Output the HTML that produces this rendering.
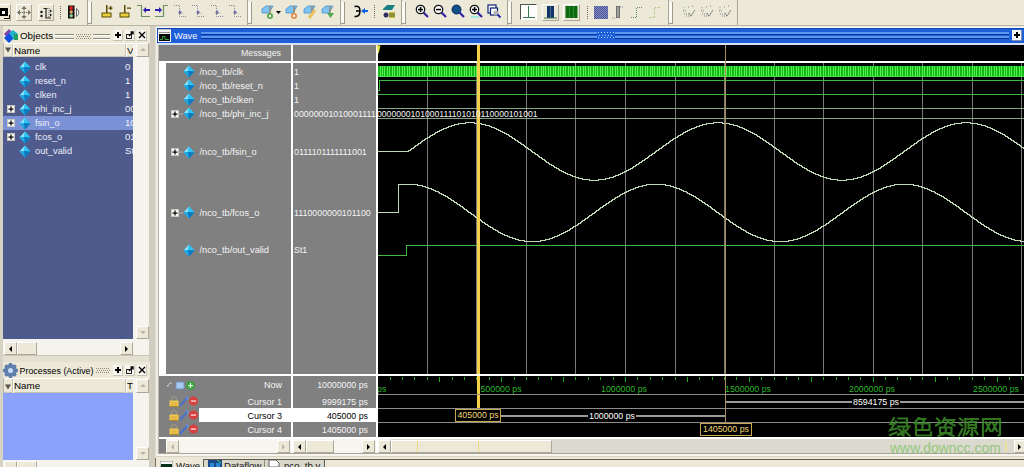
<!DOCTYPE html><html><head><meta charset="utf-8"><style>
*{margin:0;padding:0;box-sizing:border-box}
html,body{width:1024px;height:467px;overflow:hidden;background:#ECE9D8;font-family:"Liberation Sans",sans-serif;font-size:9px;color:#000}
.a{position:absolute}
.t{position:absolute;white-space:nowrap;line-height:10px;font-size:9px}
.w{color:#fff}
svg{position:absolute;left:0;top:0}
</style></head><body>
<div class="a" style="left:0px;top:0px;width:1024px;height:26px;background:#ECE9D8;"></div>
<div class="a" style="left:0px;top:25px;width:1024px;height:1px;background:#B9B6A6;"></div>
<div class="a" style="left:87px;top:0px;width:1px;height:25px;background:#A7A495;"></div>
<div class="a" style="left:247px;top:0px;width:1px;height:25px;background:#A7A495;"></div>
<div class="a" style="left:340px;top:0px;width:1px;height:25px;background:#A7A495;"></div>
<div class="a" style="left:401px;top:0px;width:1px;height:25px;background:#A7A495;"></div>
<div class="a" style="left:507px;top:0px;width:1px;height:25px;background:#A7A495;"></div>
<div class="a" style="left:668px;top:0px;width:1px;height:25px;background:#A7A495;"></div>
<div class="a" style="left:737px;top:0px;width:1px;height:25px;background:#A7A495;"></div>
<div class="a" style="left:88px;top:2px;width:3px;height:22px;background:#FBFAF6;"></div>
<div class="a" style="left:91px;top:2px;width:1px;height:22px;background:#9E9B8C;"></div>
<div class="a" style="left:88px;top:23px;width:4px;height:1px;background:#9E9B8C;"></div>
<div class="a" style="left:248px;top:2px;width:3px;height:22px;background:#FBFAF6;"></div>
<div class="a" style="left:251px;top:2px;width:1px;height:22px;background:#9E9B8C;"></div>
<div class="a" style="left:248px;top:23px;width:4px;height:1px;background:#9E9B8C;"></div>
<div class="a" style="left:341px;top:2px;width:3px;height:22px;background:#FBFAF6;"></div>
<div class="a" style="left:344px;top:2px;width:1px;height:22px;background:#9E9B8C;"></div>
<div class="a" style="left:341px;top:23px;width:4px;height:1px;background:#9E9B8C;"></div>
<div class="a" style="left:402px;top:2px;width:3px;height:22px;background:#FBFAF6;"></div>
<div class="a" style="left:405px;top:2px;width:1px;height:22px;background:#9E9B8C;"></div>
<div class="a" style="left:402px;top:23px;width:4px;height:1px;background:#9E9B8C;"></div>
<div class="a" style="left:508px;top:2px;width:3px;height:22px;background:#FBFAF6;"></div>
<div class="a" style="left:511px;top:2px;width:1px;height:22px;background:#9E9B8C;"></div>
<div class="a" style="left:508px;top:23px;width:4px;height:1px;background:#9E9B8C;"></div>
<div class="a" style="left:669px;top:2px;width:3px;height:22px;background:#FBFAF6;"></div>
<div class="a" style="left:672px;top:2px;width:1px;height:22px;background:#9E9B8C;"></div>
<div class="a" style="left:669px;top:23px;width:4px;height:1px;background:#9E9B8C;"></div>
<div class="a" style="left:-3px;top:4px;width:14px;height:17px;background:#ECE9D8;border-top:1px solid #fff;border-left:1px solid #fff;border-right:1px solid #ACA899;border-bottom:1px solid #ACA899"></div>
<div class="a" style="left:16px;top:4px;width:16px;height:17px;background:#ECE9D8;border-top:1px solid #fff;border-left:1px solid #fff;border-right:1px solid #ACA899;border-bottom:1px solid #ACA899"></div>
<div class="a" style="left:38px;top:4px;width:16px;height:17px;background:#ECE9D8;border-top:1px solid #fff;border-left:1px solid #fff;border-right:1px solid #ACA899;border-bottom:1px solid #ACA899"></div>
<svg class="a" style="left:0px;top:8px;" width="10" height="11" viewBox="0 0 10 11"><rect x="0" y="0" width="8" height="8" fill="#000"/><rect x="2" y="3" width="3" height="3" fill="#fff"/><path d="M4 10.5 H9.5 V7" stroke="#000" fill="none"/></svg>
<svg class="a" style="left:17px;top:6px;" width="14" height="13" viewBox="0 0 14 13"><g stroke="#6E6B60" stroke-width="1.2" stroke-dasharray="1.2 0.8" fill="none"><path d="M7 1 V12 M1 6.5 H13"/></g><polygon points="7,0 4.5,3 9.5,3" fill="#6E6B60"/><polygon points="7,13 4.5,10 9.5,10" fill="#6E6B60"/><polygon points="0,6.5 3,4 3,9" fill="#6E6B60"/><polygon points="14,6.5 11,4 11,9" fill="#6E6B60"/></svg>
<svg class="a" style="left:39px;top:6px;" width="14" height="13" viewBox="0 0 14 13"><circle cx="2.5" cy="6" r="1.2" fill="#111"/><circle cx="2.5" cy="10" r="1.2" fill="#111"/><path d="M4.5 2.5 H8.5 M7 2.5 V12 H12" stroke="#222" stroke-width="1.2" fill="none"/><path d="M10 2 V12" stroke="#555" stroke-dasharray="1 1"/><polygon points="13,5 11,3.5 11,6.5" fill="#111"/><polygon points="13,9 11,7.5 11,10.5" fill="#111"/></svg>
<svg class="a" style="left:60px;top:6px;" width="1" height="14" viewBox="0 0 1 14"><path d="M0.5 0 V14" stroke="#6E6B5C" stroke-dasharray="1 1"/></svg>
<svg class="a" style="left:67px;top:5px;" width="15" height="15" viewBox="0 0 15 15"><rect x="1" y="0.5" width="6.5" height="13" fill="#101010"/><circle cx="4.2" cy="3" r="2" fill="#D42020"/><circle cx="4.2" cy="7" r="1.7" fill="#EAA868"/><circle cx="4.2" cy="10.8" r="1.8" fill="#8CC88C"/><path d="M9.5 3.5 Q14 7.5 9.5 11.5 Z" fill="#fff" stroke="#333" stroke-width="0.7"/></svg>
<svg class="a" style="left:101px;top:5px;" width="13" height="13" viewBox="0 0 13 13"><rect x="1" y="8" width="9" height="4" fill="#E8D040" stroke="#5A4A00" stroke-width="1"/><rect x="5" y="0" width="1.5" height="8" fill="#5A4A00"/><rect x="7.5" y="2.5" width="4" height="1.3" fill="#5A4A00"/><rect x="9" y="1" width="1.3" height="4" fill="#5A4A00"/></svg>
<svg class="a" style="left:119px;top:5px;" width="13" height="13" viewBox="0 0 13 13"><rect x="1" y="8" width="9" height="4" fill="#E8D040" stroke="#5A4A00" stroke-width="1"/><rect x="5" y="0" width="1.5" height="8" fill="#5A4A00"/><rect x="8" y="2.5" width="4" height="1.3" fill="#5A4A00"/></svg>
<svg class="a" style="left:136px;top:4px;" width="15" height="14" viewBox="0 0 15 14"><path d="M1 1.5 H5.5 V12.5 H14" stroke="#6E9060" stroke-width="1.2" fill="none"/><polygon points="7,6 10,3 10,9" fill="#3020B0"/><rect x="9" y="5" width="5" height="2" fill="#3020B0"/></svg>
<svg class="a" style="left:154px;top:4px;" width="15" height="14" viewBox="0 0 15 14"><path d="M1 12.5 H9.5 V1.5 H14" stroke="#6E9060" stroke-width="1.2" fill="none"/><polygon points="8,6 5,3 5,9" fill="#3020B0"/><rect x="1" y="5" width="5" height="2" fill="#3020B0"/></svg>
<svg class="a" style="left:173px;top:4px;" width="14" height="14" viewBox="0 0 14 14"><g fill="none" stroke="#8A88A0" stroke-width="1" stroke-dasharray="1 1"><path d="M1 1.5 H6.5 V12.5 H13"/><path d="M6.5 6 L10 9.5"/></g><circle cx="7" cy="8.5" r="1.5" fill="#6A68A0"/></svg>
<svg class="a" style="left:191px;top:4px;" width="14" height="14" viewBox="0 0 14 14"><g fill="none" stroke="#8A88A0" stroke-width="1" stroke-dasharray="1 1"><path d="M1 1.5 H6.5 V12.5 H13"/><path d="M6.5 6 L10 9.5"/></g><circle cx="7" cy="8.5" r="1.5" fill="#6A68A0"/></svg>
<svg class="a" style="left:210px;top:4px;" width="14" height="14" viewBox="0 0 14 14"><g fill="none" stroke="#8A88A0" stroke-width="1" stroke-dasharray="1 1"><path d="M1 1.5 H6.5 V12.5 H13"/><path d="M6.5 6 L10 9.5"/></g><circle cx="7" cy="8.5" r="1.5" fill="#6A68A0"/></svg>
<svg class="a" style="left:228px;top:4px;" width="14" height="14" viewBox="0 0 14 14"><g fill="none" stroke="#8A88A0" stroke-width="1" stroke-dasharray="1 1"><path d="M1 1.5 H6.5 V12.5 H13"/><path d="M6.5 6 L10 9.5"/></g><circle cx="7" cy="8.5" r="1.5" fill="#6A68A0"/></svg>
<svg class="a" style="left:261px;top:4px;" width="15" height="15" viewBox="0 0 15 15"><polygon points="1,5 5,2 12,2 8,9 1,9" fill="#7EC4F4" stroke="#5090C8" stroke-width="0.8"/><path d="M9 2 V9" stroke="#9A7A50" stroke-width="1.2"/><circle cx="9" cy="12" r="3" fill="#5AA84A"/><circle cx="9" cy="12" r="1.2" fill="#fff"/></svg>
<svg class="a" style="left:276px;top:11px;" width="5" height="3" viewBox="0 0 5 3"><polygon points="0,0 5,0 2.5,3" fill="#000"/></svg>
<svg class="a" style="left:285px;top:4px;" width="15" height="15" viewBox="0 0 15 15"><polygon points="1,5 5,2 12,2 8,9 1,9" fill="#7EC4F4" stroke="#5090C8" stroke-width="0.8"/><path d="M9 2 V9" stroke="#9A7A50" stroke-width="1.2"/><circle cx="9" cy="12" r="3" fill="#E08848"/><circle cx="9" cy="12" r="1.2" fill="#fff"/></svg>
<svg class="a" style="left:303px;top:4px;" width="15" height="15" viewBox="0 0 15 15"><polygon points="1,5 5,2 12,2 8,9 1,9" fill="#7EC4F4" stroke="#5090C8" stroke-width="0.8"/><path d="M9 2 V9" stroke="#9A7A50" stroke-width="1.2"/><path d="M6 14 L12 6" stroke="#E8C060" stroke-width="3"/></svg>
<svg class="a" style="left:321px;top:4px;" width="15" height="15" viewBox="0 0 15 15"><polygon points="1,5 5,2 12,2 8,9 1,9" fill="#7EC4F4" stroke="#5090C8" stroke-width="0.8"/><path d="M9 2 V9" stroke="#9A7A50" stroke-width="1.2"/><polygon points="6,9 13,9 9.5,14" fill="#50A850"/></svg>
<svg class="a" style="left:353px;top:5px;" width="16" height="13" viewBox="0 0 16 13"><path d="M1.5 1.5 Q7 0 7 6 Q7 12 1.5 11.5 M3 6 H7" stroke="#000" stroke-width="1.5" fill="none"/><polygon points="8,6 12,3 12,9" fill="#1060E0"/><rect x="11" y="5" width="4" height="2" fill="#1060E0"/></svg>
<svg class="a" style="left:374px;top:5px;" width="1" height="13" viewBox="0 0 1 13"><path d="M0.5 0 V13" stroke="#6E6B5C" stroke-dasharray="1 1"/></svg>
<svg class="a" style="left:381px;top:4px;" width="15" height="15" viewBox="0 0 15 15"><polygon points="2,5 6,1 14,1 11,6 2,6" fill="#188080"/><circle cx="5" cy="11" r="2.5" fill="#303060"/><rect x="8" y="8" width="6" height="6" fill="#C8C040"/><path d="M8 10 H14 M8 12 H14" stroke="#333" stroke-width="0.7"/></svg>
<svg class="a" style="left:415px;top:4px;" width="15" height="15" viewBox="0 0 15 15"><circle cx="5.5" cy="5.5" r="4.2" fill="#fff" stroke="#111" stroke-width="1.3"/><rect x="3" y="4.8" width="5" height="1.5" fill="#000"/><rect x="4.8" y="3" width="1.5" height="5" fill="#000"/><path d="M8.5 8.5 L13 13" stroke="#3020A0" stroke-width="2.2"/></svg>
<svg class="a" style="left:433px;top:4px;" width="15" height="15" viewBox="0 0 15 15"><circle cx="5.5" cy="5.5" r="4.2" fill="#fff" stroke="#111" stroke-width="1.3"/><rect x="3" y="4.8" width="5" height="1.5" fill="#000"/><path d="M8.5 8.5 L13 13" stroke="#3020A0" stroke-width="2.2"/></svg>
<svg class="a" style="left:451px;top:4px;" width="15" height="15" viewBox="0 0 15 15"><circle cx="5.5" cy="5.5" r="4.5" fill="#10508A" stroke="#0A2A50" stroke-width="1"/><path d="M8.5 8.5 L13 13" stroke="#3020A0" stroke-width="2.2"/></svg>
<svg class="a" style="left:469px;top:4px;" width="15" height="15" viewBox="0 0 15 15"><circle cx="5.5" cy="5.5" r="4.2" fill="#fff" stroke="#111" stroke-width="1.3"/><rect x="3" y="4.8" width="5" height="1.5" fill="#000"/><rect x="4.8" y="3" width="1.5" height="5" fill="#000"/><rect x="2" y="12" width="8" height="2" fill="#A0E8E0"/><path d="M8.5 8.5 L13 13" stroke="#3020A0" stroke-width="2.2"/></svg>
<svg class="a" style="left:487px;top:4px;" width="15" height="15" viewBox="0 0 15 15"><rect x="1" y="1" width="8" height="8" fill="#fff" stroke="#0A2070" stroke-width="1.2"/><rect x="3.5" y="4" width="7" height="7" fill="#fff" stroke="#0A2070" stroke-width="1.2"/><circle cx="9" cy="9" r="2.5" fill="#B0B0B0"/><path d="M10.5 10.5 L13.5 13.5" stroke="#2020A0" stroke-width="1.8"/></svg>
<div class="a" style="left:520px;top:4px;width:17px;height:16px;background:#FDFDFB;border-top:1px solid #505050;border-left:1px solid #505050;border-right:1px solid #fff;border-bottom:1px solid #fff"></div>
<svg class="a" style="left:521px;top:5px;" width="15" height="14" viewBox="0 0 15 14"><rect x="7" y="1" width="1" height="12" fill="#3A7A50"/><rect x="2" y="12" width="12" height="1" fill="#3A7A50"/></svg>
<div class="a" style="left:542px;top:4px;width:17px;height:17px;background:#ECE9D8;border-top:1px solid #fff;border-left:1px solid #fff;border-right:1px solid #ACA899;border-bottom:1px solid #ACA899"></div>
<svg class="a" style="left:543px;top:5px;" width="15" height="15" viewBox="0 0 15 15"><rect x="4" y="1" width="7" height="12" fill="#0E3468"/><rect x="7" y="1" width="1" height="12" fill="#4A6A90"/><rect x="1" y="12.5" width="13" height="1" fill="#3A7A50"/></svg>
<div class="a" style="left:563px;top:4px;width:17px;height:17px;background:#ECE9D8;border-top:1px solid #fff;border-left:1px solid #fff;border-right:1px solid #ACA899;border-bottom:1px solid #ACA899"></div>
<svg class="a" style="left:564px;top:5px;" width="15" height="15" viewBox="0 0 15 15"><rect x="1.5" y="1" width="12" height="12" fill="#0B6A10"/><rect x="5" y="1" width="1" height="12" fill="#2A8A30"/><rect x="9" y="1" width="1" height="12" fill="#2A8A30"/></svg>
<svg class="a" style="left:587px;top:6px;" width="1" height="13" viewBox="0 0 1 13"><path d="M0.5 0 V13" stroke="#6E6B5C" stroke-dasharray="1 1"/></svg>
<svg class="a" style="left:594px;top:6px;" width="14" height="13" viewBox="0 0 14 13"><defs><pattern id="chk" width="2" height="2" patternUnits="userSpaceOnUse"><rect width="2" height="2" fill="#8088C8"/><rect width="1" height="1" fill="#505890"/><rect x="1" y="1" width="1" height="1" fill="#505890"/></pattern></defs><rect x="0" y="0" width="14" height="13" fill="url(#chk)"/></svg>
<svg class="a" style="left:612px;top:6px;" width="12" height="13" viewBox="0 0 12 13"><rect x="4" y="0" width="4" height="12" fill="#707070"/><rect x="5" y="1" width="2" height="10" fill="#A0A0A0"/><path d="M8 1 H11 M0 12 H4" stroke="#909090" stroke-dasharray="1 1"/></svg>
<svg class="a" style="left:630px;top:6px;" width="14" height="13" viewBox="0 0 14 13"><path d="M1 11.5 H6.5 V1.5 H13" stroke="#6A8A60" stroke-dasharray="1 1" fill="none"/></svg>
<svg class="a" style="left:648px;top:6px;" width="14" height="13" viewBox="0 0 14 13"><path d="M1 11.5 H6.5 V1.5 H13" stroke="#A8C060" stroke-dasharray="1 1" fill="none"/></svg>
<svg class="a" style="left:682px;top:5px;" width="15" height="12" viewBox="0 0 15 12"><path d="M1 6 H4 M2 9 H8 M4 11 H10 M6 2 H8 M10 1 H12" stroke="#888" stroke-dasharray="1 1" fill="none"/><path d="M7 8 L9 11 L13 5" stroke="#666" stroke-width="1" stroke-dasharray="1.5 0.5" fill="none"/><path d="M2 2 V6" stroke="#8AC890" stroke-dasharray="1 1"/></svg>
<svg class="a" style="left:700px;top:5px;" width="15" height="12" viewBox="0 0 15 12"><path d="M1 6 H4 M2 9 H8 M4 11 H10 M6 2 H8 M10 1 H12" stroke="#888" stroke-dasharray="1 1" fill="none"/><path d="M7 8 L9 11 L13 5" stroke="#666" stroke-width="1" stroke-dasharray="1.5 0.5" fill="none"/><path d="M2 2 V6" stroke="#999" stroke-dasharray="1 1"/></svg>
<svg class="a" style="left:718px;top:5px;" width="15" height="12" viewBox="0 0 15 12"><path d="M1 6 H4 M2 9 H8 M4 11 H10 M6 2 H8 M10 1 H12" stroke="#888" stroke-dasharray="1 1" fill="none"/><path d="M7 8 L9 11 L13 5" stroke="#666" stroke-width="1" stroke-dasharray="1.5 0.5" fill="none"/><path d="M2 2 V6" stroke="#999" stroke-dasharray="1 1"/></svg>
<div class="a" style="left:0px;top:26px;width:156px;height:441px;background:#ECE9D8;"></div>
<div class="a" style="left:0px;top:26px;width:3px;height:441px;background:#D6D3C4;"></div>
<div class="a" style="left:149px;top:26px;width:7px;height:441px;background:#D0CCBF;"></div>
<div class="a" style="left:155px;top:26px;width:1px;height:441px;background:#E2DED2;"></div>
<div class="a" style="left:3px;top:27px;width:147px;height:16px;background:#ECE9D8;"></div>
<svg class="a" style="left:3px;top:28px;" width="16" height="15" viewBox="0 0 16 15"><polygon points="1,6 6,1 9,4 4,9" fill="#8040B0"/><polygon points="1,10 6,5 11,10 6,15" fill="#1050E0"/><polygon points="6,5 10,2 15,6 15,12 11,12" fill="#20B0D0"/><polygon points="11,6 15,6 15,12 11,12" fill="#20A060"/></svg>
<div class="t" style="left:20px;top:31px;font-size:9.8px;color:#000;">Objects</div>
<svg class="a" style="left:55px;top:34px;" width="19" height="6" viewBox="0 0 19 6"><rect x="0" y="0" width="19" height="1" fill="#8E8B7C"/><rect x="0" y="1" width="19" height="1" fill="#fff"/><rect x="0" y="4" width="19" height="1" fill="#8E8B7C"/><rect x="0" y="5" width="19" height="1" fill="#fff"/></svg>
<svg class="a" style="left:76px;top:34px;" width="15" height="6" viewBox="0 0 15 6"><rect x="0" y="0" width="1" height="1" fill="#8E8B7C"/><rect x="2" y="0" width="1" height="1" fill="#8E8B7C"/><rect x="4" y="0" width="1" height="1" fill="#8E8B7C"/><rect x="6" y="0" width="1" height="1" fill="#8E8B7C"/><rect x="8" y="0" width="1" height="1" fill="#8E8B7C"/><rect x="10" y="0" width="1" height="1" fill="#8E8B7C"/><rect x="12" y="0" width="1" height="1" fill="#8E8B7C"/><rect x="14" y="0" width="1" height="1" fill="#8E8B7C"/><rect x="1" y="2" width="1" height="1" fill="#8E8B7C"/><rect x="3" y="2" width="1" height="1" fill="#8E8B7C"/><rect x="5" y="2" width="1" height="1" fill="#8E8B7C"/><rect x="7" y="2" width="1" height="1" fill="#8E8B7C"/><rect x="9" y="2" width="1" height="1" fill="#8E8B7C"/><rect x="11" y="2" width="1" height="1" fill="#8E8B7C"/><rect x="13" y="2" width="1" height="1" fill="#8E8B7C"/><rect x="15" y="2" width="1" height="1" fill="#8E8B7C"/><rect x="0" y="4" width="1" height="1" fill="#8E8B7C"/><rect x="2" y="4" width="1" height="1" fill="#8E8B7C"/><rect x="4" y="4" width="1" height="1" fill="#8E8B7C"/><rect x="6" y="4" width="1" height="1" fill="#8E8B7C"/><rect x="8" y="4" width="1" height="1" fill="#8E8B7C"/><rect x="10" y="4" width="1" height="1" fill="#8E8B7C"/><rect x="12" y="4" width="1" height="1" fill="#8E8B7C"/><rect x="14" y="4" width="1" height="1" fill="#8E8B7C"/></svg>
<svg class="a" style="left:93px;top:34px;" width="17" height="6" viewBox="0 0 17 6"><rect x="0" y="0" width="17" height="1" fill="#8E8B7C"/><rect x="0" y="1" width="17" height="1" fill="#fff"/><rect x="0" y="4" width="17" height="1" fill="#8E8B7C"/><rect x="0" y="5" width="17" height="1" fill="#fff"/></svg>
<svg class="a" style="left:113px;top:30px;" width="36" height="11" viewBox="0 0 36 11"><rect x="0" y="0" width="10" height="11" fill="#F6F5F0"/><rect x="9" y="0" width="1" height="11" fill="#C8C5B5"/><rect x="0" y="10" width="10" height="1" fill="#C8C5B5"/><rect x="2" y="4" width="6" height="2" fill="#000"/><rect x="4" y="2" width="2" height="6" fill="#000"/><rect x="12" y="0" width="10" height="11" fill="#F6F5F0"/><rect x="21" y="0" width="1" height="11" fill="#C8C5B5"/><rect x="12" y="10" width="10" height="1" fill="#C8C5B5"/><rect x="13.5" y="4.5" width="5" height="4" fill="none" stroke="#222"/><path d="M16 6 L20 2 M17.5 2 H20 V4.5" stroke="#000" stroke-width="1.3" fill="none"/><rect x="24" y="0" width="10" height="11" fill="#F6F5F0"/><rect x="33" y="0" width="1" height="11" fill="#C8C5B5"/><rect x="24" y="10" width="10" height="1" fill="#C8C5B5"/><path d="M26 2 L32 8 M32 2 L26 8" stroke="#000" stroke-width="1.4"/></svg>
<div class="a" style="left:3px;top:43px;width:130px;height:14px;background:#ECE9D8;border-top:1px solid #fff;border-bottom:1px solid #C9C6B6"></div>
<div class="a" style="left:3px;top:43px;width:1px;height:14px;background:#B8B5A5;"></div>
<div class="a" style="left:12px;top:44px;width:1px;height:13px;background:#CAC7B7;"></div>
<div class="a" style="left:13px;top:44px;width:1px;height:13px;background:#fff;"></div>
<div class="a" style="left:125px;top:44px;width:1px;height:13px;background:#CAC7B7;"></div>
<div class="a" style="left:126px;top:44px;width:1px;height:13px;background:#fff;"></div>
<svg class="a" style="left:5px;top:47px;" width="7" height="6" viewBox="0 0 7 6"><polygon points="0,0.5 6,0.5 3,5.5" fill="#55524A"/></svg>
<div class="t" style="left:14px;top:46px;font-size:9.8px;color:#000;">Name</div>
<div class="t" style="left:127px;top:46px;font-size:9.8px;color:#111;">V.</div>
<div class="a" style="left:3px;top:57px;width:130px;height:282px;background:#4F5A8D;"></div>
<div class="a" style="left:3px;top:116px;width:130px;height:14px;background:#7A91D6;"></div>
<svg class="a" style="left:19px;top:61px;" width="12" height="13" viewBox="0 0 12 13"><polygon points="0.5,6.5 6,0.5 11.5,6.5 6,12.5" fill="#1AA6DE"/><polygon points="0.5,6.5 6,0.5 5,6" fill="#8AE4FC"/><polygon points="6,0.5 11.5,6.5 5,6" fill="#30C4F2"/><polygon points="0.5,6.5 6,12.5 5,6" fill="#22A8E0"/><polygon points="11.5,6.5 6,12.5 5,6" fill="#0E78C0"/></svg>
<div class="t" style="left:35px;top:61.8px;font-size:9.25px;color:#ECEEF8;">clk</div>
<div class="t" style="left:125px;top:61.8px;font-size:9.6px;color:#F0F2FA;">0</div>
<svg class="a" style="left:19px;top:75px;" width="12" height="13" viewBox="0 0 12 13"><polygon points="0.5,6.5 6,0.5 11.5,6.5 6,12.5" fill="#1AA6DE"/><polygon points="0.5,6.5 6,0.5 5,6" fill="#8AE4FC"/><polygon points="6,0.5 11.5,6.5 5,6" fill="#30C4F2"/><polygon points="0.5,6.5 6,12.5 5,6" fill="#22A8E0"/><polygon points="11.5,6.5 6,12.5 5,6" fill="#0E78C0"/></svg>
<div class="t" style="left:35px;top:75.8px;font-size:9.25px;color:#ECEEF8;">reset_n</div>
<div class="t" style="left:125px;top:75.8px;font-size:9.6px;color:#F0F2FA;">1</div>
<svg class="a" style="left:19px;top:89px;" width="12" height="13" viewBox="0 0 12 13"><polygon points="0.5,6.5 6,0.5 11.5,6.5 6,12.5" fill="#1AA6DE"/><polygon points="0.5,6.5 6,0.5 5,6" fill="#8AE4FC"/><polygon points="6,0.5 11.5,6.5 5,6" fill="#30C4F2"/><polygon points="0.5,6.5 6,12.5 5,6" fill="#22A8E0"/><polygon points="11.5,6.5 6,12.5 5,6" fill="#0E78C0"/></svg>
<div class="t" style="left:35px;top:89.8px;font-size:9.25px;color:#ECEEF8;">clken</div>
<div class="t" style="left:125px;top:89.8px;font-size:9.6px;color:#F0F2FA;">1</div>
<svg class="a" style="left:19px;top:103px;" width="12" height="13" viewBox="0 0 12 13"><polygon points="0.5,6.5 6,0.5 11.5,6.5 6,12.5" fill="#1AA6DE"/><polygon points="0.5,6.5 6,0.5 5,6" fill="#8AE4FC"/><polygon points="6,0.5 11.5,6.5 5,6" fill="#30C4F2"/><polygon points="0.5,6.5 6,12.5 5,6" fill="#22A8E0"/><polygon points="11.5,6.5 6,12.5 5,6" fill="#0E78C0"/></svg>
<svg class="a" style="left:7px;top:105px;" width="13" height="9" viewBox="0 0 13 9"><rect x="0.5" y="0.5" width="7" height="7" fill="#F8F8F6" stroke="#C8C8C0"/><rect x="1.5" y="3.5" width="5" height="1.2" fill="#000"/><rect x="3.4" y="1.5" width="1.2" height="5" fill="#000"/></svg>
<div class="t" style="left:35px;top:103.8px;font-size:9.25px;color:#ECEEF8;">phi_inc_j</div>
<div class="t" style="left:125px;top:103.8px;font-size:9.6px;color:#F0F2FA;">00</div>
<svg class="a" style="left:19px;top:117px;" width="12" height="13" viewBox="0 0 12 13"><polygon points="0.5,6.5 6,0.5 11.5,6.5 6,12.5" fill="#1AA6DE"/><polygon points="0.5,6.5 6,0.5 5,6" fill="#8AE4FC"/><polygon points="6,0.5 11.5,6.5 5,6" fill="#30C4F2"/><polygon points="0.5,6.5 6,12.5 5,6" fill="#22A8E0"/><polygon points="11.5,6.5 6,12.5 5,6" fill="#0E78C0"/></svg>
<svg class="a" style="left:7px;top:119px;" width="13" height="9" viewBox="0 0 13 9"><rect x="0.5" y="0.5" width="7" height="7" fill="#F8F8F6" stroke="#C8C8C0"/><rect x="1.5" y="3.5" width="5" height="1.2" fill="#000"/><rect x="3.4" y="1.5" width="1.2" height="5" fill="#000"/></svg>
<div class="t" style="left:35px;top:117.8px;font-size:9.25px;color:#ECEEF8;">fsin_o</div>
<div class="t" style="left:125px;top:117.8px;font-size:9.6px;color:#F0F2FA;">10</div>
<svg class="a" style="left:19px;top:131px;" width="12" height="13" viewBox="0 0 12 13"><polygon points="0.5,6.5 6,0.5 11.5,6.5 6,12.5" fill="#1AA6DE"/><polygon points="0.5,6.5 6,0.5 5,6" fill="#8AE4FC"/><polygon points="6,0.5 11.5,6.5 5,6" fill="#30C4F2"/><polygon points="0.5,6.5 6,12.5 5,6" fill="#22A8E0"/><polygon points="11.5,6.5 6,12.5 5,6" fill="#0E78C0"/></svg>
<svg class="a" style="left:7px;top:133px;" width="13" height="9" viewBox="0 0 13 9"><rect x="0.5" y="0.5" width="7" height="7" fill="#F8F8F6" stroke="#C8C8C0"/><rect x="1.5" y="3.5" width="5" height="1.2" fill="#000"/><rect x="3.4" y="1.5" width="1.2" height="5" fill="#000"/></svg>
<div class="t" style="left:35px;top:131.8px;font-size:9.25px;color:#ECEEF8;">fcos_o</div>
<div class="t" style="left:125px;top:131.8px;font-size:9.6px;color:#F0F2FA;">01</div>
<svg class="a" style="left:19px;top:145px;" width="12" height="13" viewBox="0 0 12 13"><polygon points="0.5,6.5 6,0.5 11.5,6.5 6,12.5" fill="#1AA6DE"/><polygon points="0.5,6.5 6,0.5 5,6" fill="#8AE4FC"/><polygon points="6,0.5 11.5,6.5 5,6" fill="#30C4F2"/><polygon points="0.5,6.5 6,12.5 5,6" fill="#22A8E0"/><polygon points="11.5,6.5 6,12.5 5,6" fill="#0E78C0"/></svg>
<div class="t" style="left:35px;top:145.8px;font-size:9.25px;color:#ECEEF8;">out_valid</div>
<div class="t" style="left:125px;top:145.8px;font-size:9.6px;color:#F0F2FA;">St</div>
<div class="a" style="left:133px;top:43px;width:16px;height:297px;background:#F5F3ED;"></div>
<div class="a" style="left:136px;top:43px;width:13px;height:14px;background:#ECE9D8;border-top:1px solid #fff;border-left:1px solid #fff;border-right:1px solid #ACA899;border-bottom:1px solid #ACA899"></div>
<svg class="a" style="left:140px;top:48px;" width="6" height="3" viewBox="0 0 6 3"><polygon points="0,3 6,3 3,0" fill="#B8B5A8"/></svg>
<div class="a" style="left:136px;top:326px;width:13px;height:13px;background:#ECE9D8;border-top:1px solid #fff;border-left:1px solid #fff;border-right:1px solid #ACA899;border-bottom:1px solid #ACA899"></div>
<svg class="a" style="left:140px;top:331px;" width="6" height="3" viewBox="0 0 6 3"><polygon points="0,0 6,0 3,3" fill="#B8B5A8"/></svg>
<div class="a" style="left:3px;top:339px;width:146px;height:17px;background:#F5F3ED;"></div>
<div class="a" style="left:4px;top:342px;width:13px;height:13px;background:#ECE9D8;border-top:1px solid #fff;border-left:1px solid #fff;border-right:1px solid #ACA899;border-bottom:1px solid #ACA899"></div>
<svg class="a" style="left:9px;top:346px;" width="3" height="6" viewBox="0 0 3 6"><polygon points="3,0 3,6 0,3" fill="#000"/></svg>
<div class="a" style="left:17px;top:342px;width:20px;height:13px;background:#ECE9D8;border-top:1px solid #fff;border-left:1px solid #fff;border-right:1px solid #ACA899;border-bottom:1px solid #ACA899"></div>
<div class="a" style="left:120px;top:342px;width:13px;height:13px;background:#ECE9D8;border-top:1px solid #fff;border-left:1px solid #fff;border-right:1px solid #ACA899;border-bottom:1px solid #ACA899"></div>
<svg class="a" style="left:125px;top:346px;" width="3" height="6" viewBox="0 0 3 6"><polygon points="0,0 0,6 3,3" fill="#000"/></svg>
<div class="a" style="left:3px;top:355px;width:147px;height:1px;background:#C9C6B6;"></div>
<div class="a" style="left:3px;top:356px;width:146px;height:6px;background:#E4E1D2;"></div>
<div class="a" style="left:3px;top:362px;width:147px;height:16px;background:#ECE9D8;"></div>
<svg class="a" style="left:3px;top:363px;" width="15" height="15" viewBox="0 0 15 15"><circle cx="7.5" cy="7.5" r="6.5" fill="#5F7FAE"/><rect x="6" y="0" width="3" height="3" fill="#5F7FAE" transform="rotate(0 7.5 7.5)"/><rect x="6" y="0" width="3" height="3" fill="#5F7FAE" transform="rotate(45 7.5 7.5)"/><rect x="6" y="0" width="3" height="3" fill="#5F7FAE" transform="rotate(90 7.5 7.5)"/><rect x="6" y="0" width="3" height="3" fill="#5F7FAE" transform="rotate(135 7.5 7.5)"/><rect x="6" y="0" width="3" height="3" fill="#5F7FAE" transform="rotate(180 7.5 7.5)"/><rect x="6" y="0" width="3" height="3" fill="#5F7FAE" transform="rotate(225 7.5 7.5)"/><rect x="6" y="0" width="3" height="3" fill="#5F7FAE" transform="rotate(270 7.5 7.5)"/><rect x="6" y="0" width="3" height="3" fill="#5F7FAE" transform="rotate(315 7.5 7.5)"/><circle cx="7.5" cy="7.5" r="2.5" fill="#C8E0F8"/></svg>
<div class="t" style="left:19.5px;top:366px;font-size:8.9px;color:#000;">Processes (Active)</div>
<svg class="a" style="left:96px;top:368px;" width="14" height="6" viewBox="0 0 14 6"><rect x="0" y="0" width="1" height="1" fill="#8E8B7C"/><rect x="2" y="0" width="1" height="1" fill="#8E8B7C"/><rect x="4" y="0" width="1" height="1" fill="#8E8B7C"/><rect x="6" y="0" width="1" height="1" fill="#8E8B7C"/><rect x="8" y="0" width="1" height="1" fill="#8E8B7C"/><rect x="10" y="0" width="1" height="1" fill="#8E8B7C"/><rect x="12" y="0" width="1" height="1" fill="#8E8B7C"/><rect x="1" y="2" width="1" height="1" fill="#8E8B7C"/><rect x="3" y="2" width="1" height="1" fill="#8E8B7C"/><rect x="5" y="2" width="1" height="1" fill="#8E8B7C"/><rect x="7" y="2" width="1" height="1" fill="#8E8B7C"/><rect x="9" y="2" width="1" height="1" fill="#8E8B7C"/><rect x="11" y="2" width="1" height="1" fill="#8E8B7C"/><rect x="13" y="2" width="1" height="1" fill="#8E8B7C"/><rect x="0" y="4" width="1" height="1" fill="#8E8B7C"/><rect x="2" y="4" width="1" height="1" fill="#8E8B7C"/><rect x="4" y="4" width="1" height="1" fill="#8E8B7C"/><rect x="6" y="4" width="1" height="1" fill="#8E8B7C"/><rect x="8" y="4" width="1" height="1" fill="#8E8B7C"/><rect x="10" y="4" width="1" height="1" fill="#8E8B7C"/><rect x="12" y="4" width="1" height="1" fill="#8E8B7C"/></svg>
<svg class="a" style="left:113px;top:365px;" width="36" height="11" viewBox="0 0 36 11"><rect x="0" y="0" width="10" height="11" fill="#F6F5F0"/><rect x="9" y="0" width="1" height="11" fill="#C8C5B5"/><rect x="0" y="10" width="10" height="1" fill="#C8C5B5"/><rect x="2" y="4" width="6" height="2" fill="#000"/><rect x="4" y="2" width="2" height="6" fill="#000"/><rect x="12" y="0" width="10" height="11" fill="#F6F5F0"/><rect x="21" y="0" width="1" height="11" fill="#C8C5B5"/><rect x="12" y="10" width="10" height="1" fill="#C8C5B5"/><rect x="13.5" y="4.5" width="5" height="4" fill="none" stroke="#222"/><path d="M16 6 L20 2 M17.5 2 H20 V4.5" stroke="#000" stroke-width="1.3" fill="none"/><rect x="24" y="0" width="10" height="11" fill="#F6F5F0"/><rect x="33" y="0" width="1" height="11" fill="#C8C5B5"/><rect x="24" y="10" width="10" height="1" fill="#C8C5B5"/><path d="M26 2 L32 8 M32 2 L26 8" stroke="#000" stroke-width="1.4"/></svg>
<div class="a" style="left:3px;top:378px;width:130px;height:15px;background:#ECE9D8;border-top:1px solid #fff;border-bottom:1px solid #C9C6B6"></div>
<div class="a" style="left:3px;top:378px;width:1px;height:15px;background:#B8B5A5;"></div>
<div class="a" style="left:12px;top:379px;width:1px;height:14px;background:#CAC7B7;"></div>
<div class="a" style="left:13px;top:379px;width:1px;height:14px;background:#fff;"></div>
<div class="a" style="left:125px;top:379px;width:1px;height:14px;background:#CAC7B7;"></div>
<div class="a" style="left:126px;top:379px;width:1px;height:14px;background:#fff;"></div>
<svg class="a" style="left:5px;top:384px;" width="7" height="6" viewBox="0 0 7 6"><polygon points="0,0.5 6,0.5 3,5.5" fill="#55524A"/></svg>
<div class="t" style="left:14px;top:381px;font-size:9.8px;color:#000;">Name</div>
<div class="t" style="left:127px;top:381px;font-size:9.8px;color:#000;">T</div>
<div class="a" style="left:3px;top:393px;width:130px;height:67px;background:#8AA2FC;"></div>
<div class="a" style="left:133px;top:378px;width:16px;height:89px;background:#F5F3ED;"></div>
<div class="a" style="left:136px;top:379px;width:13px;height:14px;background:#ECE9D8;border-top:1px solid #fff;border-left:1px solid #fff;border-right:1px solid #ACA899;border-bottom:1px solid #ACA899"></div>
<svg class="a" style="left:140px;top:384px;" width="6" height="3" viewBox="0 0 6 3"><polygon points="0,3 6,3 3,0" fill="#B8B5A8"/></svg>
<div class="a" style="left:136px;top:447px;width:13px;height:13px;background:#ECE9D8;border-top:1px solid #fff;border-left:1px solid #fff;border-right:1px solid #ACA899;border-bottom:1px solid #ACA899"></div>
<svg class="a" style="left:140px;top:452px;" width="6" height="3" viewBox="0 0 6 3"><polygon points="0,0 6,0 3,3" fill="#B8B5A8"/></svg>
<div class="a" style="left:3px;top:460px;width:146px;height:7px;background:#F5F3ED;"></div>
<div class="a" style="left:4px;top:461px;width:13px;height:8px;background:#ECE9D8;border-top:1px solid #fff;border-left:1px solid #fff;border-right:1px solid #ACA899;border-bottom:1px solid #ACA899"></div>
<div class="a" style="left:17px;top:461px;width:20px;height:8px;background:#ECE9D8;border-top:1px solid #fff;border-left:1px solid #fff;border-right:1px solid #ACA899;border-bottom:1px solid #ACA899"></div>
<div class="a" style="left:156px;top:26px;width:868px;height:1px;background:#ECE9D8;"></div>
<div class="a" style="left:156px;top:27px;width:868px;height:1px;background:#F4F6FA;"></div>
<div class="a" style="left:156px;top:28px;width:1px;height:17px;background:#F4F6FA;"></div>
<div class="a" style="left:157px;top:28px;width:867px;height:15px;background:#1E5FD9;"></div>
<div class="a" style="left:157px;top:28px;width:867px;height:1px;background:#1446B8;"></div>
<div class="a" style="left:157px;top:28px;width:1px;height:15px;background:#1446B8;"></div>
<div class="a" style="left:157px;top:43px;width:867px;height:2px;background:#D6E2F4;"></div>
<svg class="a" style="left:158px;top:29px;" width="13" height="13" viewBox="0 0 13 13"><rect x="0" y="0" width="13" height="13" fill="#F4F4F4"/><rect x="0" y="0" width="13" height="1" fill="#C0C0C0"/><rect x="1" y="5" width="11" height="7" fill="#050505"/><path d="M2 10.5 H4.5 V7.5 H7 V10.5 H11" stroke="#3AA040" fill="none"/><rect x="1" y="3" width="11" height="1" fill="#909090"/></svg>
<div class="t" style="left:174px;top:30.5px;font-size:9.3px;color:#F8F8FF;">Wave</div>
<div class="a" style="left:201px;top:32px;width:808px;height:2px;background:#5A97F2;"></div>
<div class="a" style="left:201px;top:34px;width:808px;height:1px;background:#0B3490;"></div>
<div class="a" style="left:201px;top:36px;width:808px;height:2px;background:#5A97F2;"></div>
<div class="a" style="left:201px;top:38px;width:808px;height:1px;background:#0B3490;"></div>
<div class="a" style="left:597px;top:31px;width:18px;height:9px;background:#1E5FD9;"></div>
<svg class="a" style="left:597px;top:31px;" width="18" height="9" viewBox="0 0 18 9"><rect x="1" y="1" width="1" height="1" fill="#A8D0FF"/><rect x="4" y="1" width="1" height="1" fill="#A8D0FF"/><rect x="7" y="1" width="1" height="1" fill="#A8D0FF"/><rect x="10" y="1" width="1" height="1" fill="#A8D0FF"/><rect x="13" y="1" width="1" height="1" fill="#A8D0FF"/><rect x="16" y="1" width="1" height="1" fill="#A8D0FF"/><rect x="2" y="4" width="1" height="1" fill="#A8D0FF"/><rect x="5" y="4" width="1" height="1" fill="#A8D0FF"/><rect x="8" y="4" width="1" height="1" fill="#A8D0FF"/><rect x="11" y="4" width="1" height="1" fill="#A8D0FF"/><rect x="14" y="4" width="1" height="1" fill="#A8D0FF"/><rect x="1" y="6" width="1" height="1" fill="#A8D0FF"/><rect x="4" y="6" width="1" height="1" fill="#A8D0FF"/><rect x="7" y="6" width="1" height="1" fill="#A8D0FF"/><rect x="10" y="6" width="1" height="1" fill="#A8D0FF"/><rect x="13" y="6" width="1" height="1" fill="#A8D0FF"/><rect x="16" y="6" width="1" height="1" fill="#A8D0FF"/></svg>
<svg class="a" style="left:1012px;top:30px;" width="10" height="11" viewBox="0 0 10 11"><rect x="0" y="0" width="10" height="11" fill="#F6F6F6"/><rect x="9" y="0" width="1" height="11" fill="#8090B0"/><rect x="0" y="10" width="10" height="1" fill="#8090B0"/><rect x="2" y="4" width="6" height="2" fill="#000"/><rect x="4" y="2" width="2" height="6" fill="#000"/></svg>
<div class="a" style="left:156px;top:45px;width:2px;height:412px;background:#EEEBE0;"></div>
<div class="a" style="left:158px;top:45px;width:1px;height:412px;background:#BAB6AA;"></div>
<div class="a" style="left:159px;top:45px;width:132px;height:16px;background:#808080;"></div>
<div class="a" style="left:291px;top:45px;width:2px;height:330px;background:#FFFFFF;"></div>
<div class="a" style="left:293px;top:45px;width:83px;height:16px;background:#808080;"></div>
<div class="a" style="left:376px;top:45px;width:2px;height:330px;background:#FFFFFF;"></div>
<div class="a" style="left:378px;top:45px;width:646px;height:16px;background:#000;"></div>
<div class="t" style="right:743px;top:48px;font-size:8.8px;color:#F4F4F4;">Messages</div>
<div class="a" style="left:159px;top:61px;width:865px;height:2px;background:#fff;"></div>
<div class="a" style="left:159px;top:63px;width:7px;height:311px;background:#FFFFFF;"></div>
<div class="a" style="left:166px;top:63px;width:125px;height:311px;background:#808080;"></div>
<div class="a" style="left:293px;top:63px;width:83px;height:311px;background:#808080;"></div>
<div class="a" style="left:378px;top:63px;width:646px;height:311px;background:#000;"></div>
<div class="a" style="left:159px;top:374px;width:865px;height:2px;background:#fff;"></div>
<div class="a" style="left:159px;top:376px;width:132px;height:61px;background:#808080;"></div>
<div class="a" style="left:291px;top:376px;width:2px;height:61px;background:#fff;"></div>
<div class="a" style="left:293px;top:376px;width:83px;height:61px;background:#808080;"></div>
<div class="a" style="left:376px;top:376px;width:2px;height:61px;background:#fff;"></div>
<div class="a" style="left:378px;top:376px;width:646px;height:61px;background:#000;"></div>
<div class="a" style="left:159px;top:437px;width:865px;height:2px;background:#fff;"></div>
<div class="a" style="left:159px;top:439px;width:865px;height:15px;background:#F6F5EF;"></div>
<div class="a" style="left:159px;top:439px;width:7px;height:15px;background:#808080;"></div>
<div class="a" style="left:166px;top:440px;width:13px;height:13px;background:#ECE9D8;border-top:1px solid #fff;border-left:1px solid #fff;border-right:1px solid #ACA899;border-bottom:1px solid #ACA899"></div>
<svg class="a" style="left:171px;top:444px;" width="3" height="6" viewBox="0 0 3 6"><polygon points="3,0 3,6 0,3" fill="#B8B5A8"/></svg>
<div class="a" style="left:277px;top:440px;width:13px;height:13px;background:#ECE9D8;border-top:1px solid #fff;border-left:1px solid #fff;border-right:1px solid #ACA899;border-bottom:1px solid #ACA899"></div>
<svg class="a" style="left:282px;top:444px;" width="3" height="6" viewBox="0 0 3 6"><polygon points="0,0 0,6 3,3" fill="#B8B5A8"/></svg>
<div class="a" style="left:291px;top:439px;width:2px;height:15px;background:#fff;"></div>
<div class="a" style="left:293px;top:440px;width:13px;height:13px;background:#ECE9D8;border-top:1px solid #fff;border-left:1px solid #fff;border-right:1px solid #ACA899;border-bottom:1px solid #ACA899"></div>
<svg class="a" style="left:298px;top:444px;" width="3" height="6" viewBox="0 0 3 6"><polygon points="3,0 3,6 0,3" fill="#000"/></svg>
<div class="a" style="left:306px;top:440px;width:28px;height:13px;background:#ECE9D8;border-top:1px solid #fff;border-left:1px solid #fff;border-right:1px solid #ACA899;border-bottom:1px solid #ACA899"></div>
<div class="a" style="left:362px;top:440px;width:13px;height:13px;background:#ECE9D8;border-top:1px solid #fff;border-left:1px solid #fff;border-right:1px solid #ACA899;border-bottom:1px solid #ACA899"></div>
<svg class="a" style="left:367px;top:444px;" width="3" height="6" viewBox="0 0 3 6"><polygon points="0,0 0,6 3,3" fill="#000"/></svg>
<div class="a" style="left:376px;top:439px;width:2px;height:15px;background:#fff;"></div>
<div class="a" style="left:391px;top:439px;width:633px;height:15px;background:#DCD9CE;"></div>
<div class="a" style="left:378px;top:440px;width:13px;height:13px;background:#ECE9D8;border-top:1px solid #fff;border-left:1px solid #fff;border-right:1px solid #ACA899;border-bottom:1px solid #ACA899"></div>
<svg class="a" style="left:383px;top:444px;" width="3" height="6" viewBox="0 0 3 6"><polygon points="3,0 3,6 0,3" fill="#000"/></svg>
<div class="a" style="left:391px;top:440px;width:161px;height:13px;background:#ECE9D8;border-top:1px solid #fff;border-left:1px solid #fff;border-right:1px solid #ACA899;border-bottom:1px solid #ACA899"></div>
<div class="a" style="left:417px;top:441px;width:1px;height:11px;background:#F0D880;"></div>
<div class="a" style="left:478px;top:441px;width:1px;height:11px;background:#F0D880;"></div>
<div class="a" style="left:1005px;top:441px;width:2px;height:11px;background:#F0E0A0;"></div>
<div class="a" style="left:1014px;top:440px;width:11px;height:13px;background:#ECE9D8;border-top:1px solid #fff;border-left:1px solid #fff;border-right:1px solid #ACA899;border-bottom:1px solid #ACA899"></div>
<svg class="a" style="left:1018px;top:444px;" width="3" height="6" viewBox="0 0 3 6"><polygon points="0,0 0,6 3,3" fill="#000"/></svg>
<div class="a" style="left:159px;top:453px;width:865px;height:1px;background:#A8A598;"></div>
<svg class="a" style="left:183px;top:65px;" width="12" height="13" viewBox="0 0 12 13"><polygon points="0.5,6.5 6,0.5 11.5,6.5 6,12.5" fill="#1AA6DE"/><polygon points="0.5,6.5 6,0.5 5,6" fill="#8AE4FC"/><polygon points="6,0.5 11.5,6.5 5,6" fill="#30C4F2"/><polygon points="0.5,6.5 6,12.5 5,6" fill="#22A8E0"/><polygon points="11.5,6.5 6,12.5 5,6" fill="#0E78C0"/></svg>
<div class="t" style="left:199.5px;top:66.5px;font-size:9.2px;color:#F4F4F4;">/nco_tb/clk</div>
<div class="t" style="left:294px;top:66.5px;width:82px;overflow:hidden;font-size:8.85px;color:#F4F4F4">1</div>
<svg class="a" style="left:183px;top:79px;" width="12" height="13" viewBox="0 0 12 13"><polygon points="0.5,6.5 6,0.5 11.5,6.5 6,12.5" fill="#1AA6DE"/><polygon points="0.5,6.5 6,0.5 5,6" fill="#8AE4FC"/><polygon points="6,0.5 11.5,6.5 5,6" fill="#30C4F2"/><polygon points="0.5,6.5 6,12.5 5,6" fill="#22A8E0"/><polygon points="11.5,6.5 6,12.5 5,6" fill="#0E78C0"/></svg>
<div class="t" style="left:199.5px;top:80.5px;font-size:9.2px;color:#F4F4F4;">/nco_tb/reset_n</div>
<div class="t" style="left:294px;top:80.5px;width:82px;overflow:hidden;font-size:8.85px;color:#F4F4F4">1</div>
<svg class="a" style="left:183px;top:93px;" width="12" height="13" viewBox="0 0 12 13"><polygon points="0.5,6.5 6,0.5 11.5,6.5 6,12.5" fill="#1AA6DE"/><polygon points="0.5,6.5 6,0.5 5,6" fill="#8AE4FC"/><polygon points="6,0.5 11.5,6.5 5,6" fill="#30C4F2"/><polygon points="0.5,6.5 6,12.5 5,6" fill="#22A8E0"/><polygon points="11.5,6.5 6,12.5 5,6" fill="#0E78C0"/></svg>
<div class="t" style="left:199.5px;top:94.5px;font-size:9.2px;color:#F4F4F4;">/nco_tb/clken</div>
<div class="t" style="left:294px;top:94.5px;width:82px;overflow:hidden;font-size:8.85px;color:#F4F4F4">1</div>
<svg class="a" style="left:183px;top:107px;" width="12" height="13" viewBox="0 0 12 13"><polygon points="0.5,6.5 6,0.5 11.5,6.5 6,12.5" fill="#1AA6DE"/><polygon points="0.5,6.5 6,0.5 5,6" fill="#8AE4FC"/><polygon points="6,0.5 11.5,6.5 5,6" fill="#30C4F2"/><polygon points="0.5,6.5 6,12.5 5,6" fill="#22A8E0"/><polygon points="11.5,6.5 6,12.5 5,6" fill="#0E78C0"/></svg>
<svg class="a" style="left:171px;top:110px;" width="13" height="9" viewBox="0 0 13 9"><rect x="0.5" y="0.5" width="7" height="7" fill="#F8F8F6" stroke="#C8C8C0"/><rect x="1.5" y="3.5" width="5" height="1.2" fill="#000"/><rect x="3.4" y="1.5" width="1.2" height="5" fill="#000"/><rect x="8" y="3.5" width="4" height="1" fill="#B0B0B0"/></svg>
<div class="t" style="left:199.5px;top:108.5px;font-size:9.2px;color:#F4F4F4;">/nco_tb/phi_inc_j</div>
<div class="t" style="left:294px;top:108.5px;width:82px;overflow:hidden;font-size:8.85px;color:#F4F4F4">0000000101000111101010110000101001</div>
<svg class="a" style="left:183px;top:146px;" width="12" height="13" viewBox="0 0 12 13"><polygon points="0.5,6.5 6,0.5 11.5,6.5 6,12.5" fill="#1AA6DE"/><polygon points="0.5,6.5 6,0.5 5,6" fill="#8AE4FC"/><polygon points="6,0.5 11.5,6.5 5,6" fill="#30C4F2"/><polygon points="0.5,6.5 6,12.5 5,6" fill="#22A8E0"/><polygon points="11.5,6.5 6,12.5 5,6" fill="#0E78C0"/></svg>
<svg class="a" style="left:171px;top:148px;" width="13" height="9" viewBox="0 0 13 9"><rect x="0.5" y="0.5" width="7" height="7" fill="#F8F8F6" stroke="#C8C8C0"/><rect x="1.5" y="3.5" width="5" height="1.2" fill="#000"/><rect x="3.4" y="1.5" width="1.2" height="5" fill="#000"/><rect x="8" y="3.5" width="4" height="1" fill="#B0B0B0"/></svg>
<div class="t" style="left:199.5px;top:147px;font-size:9.2px;color:#F4F4F4;">/nco_tb/fsin_o</div>
<div class="t" style="left:294px;top:147px;width:82px;overflow:hidden;font-size:8.85px;color:#F4F4F4">0111101111111001</div>
<svg class="a" style="left:183px;top:206px;" width="12" height="13" viewBox="0 0 12 13"><polygon points="0.5,6.5 6,0.5 11.5,6.5 6,12.5" fill="#1AA6DE"/><polygon points="0.5,6.5 6,0.5 5,6" fill="#8AE4FC"/><polygon points="6,0.5 11.5,6.5 5,6" fill="#30C4F2"/><polygon points="0.5,6.5 6,12.5 5,6" fill="#22A8E0"/><polygon points="11.5,6.5 6,12.5 5,6" fill="#0E78C0"/></svg>
<svg class="a" style="left:171px;top:209px;" width="13" height="9" viewBox="0 0 13 9"><rect x="0.5" y="0.5" width="7" height="7" fill="#F8F8F6" stroke="#C8C8C0"/><rect x="1.5" y="3.5" width="5" height="1.2" fill="#000"/><rect x="3.4" y="1.5" width="1.2" height="5" fill="#000"/><rect x="8" y="3.5" width="4" height="1" fill="#B0B0B0"/></svg>
<div class="t" style="left:199.5px;top:208px;font-size:9.2px;color:#F4F4F4;">/nco_tb/fcos_o</div>
<div class="t" style="left:294px;top:208px;width:82px;overflow:hidden;font-size:8.85px;color:#F4F4F4">1110000000101100</div>
<svg class="a" style="left:183px;top:244px;" width="12" height="13" viewBox="0 0 12 13"><polygon points="0.5,6.5 6,0.5 11.5,6.5 6,12.5" fill="#1AA6DE"/><polygon points="0.5,6.5 6,0.5 5,6" fill="#8AE4FC"/><polygon points="6,0.5 11.5,6.5 5,6" fill="#30C4F2"/><polygon points="0.5,6.5 6,12.5 5,6" fill="#22A8E0"/><polygon points="11.5,6.5 6,12.5 5,6" fill="#0E78C0"/></svg>
<div class="t" style="left:199.5px;top:245px;font-size:9.2px;color:#F4F4F4;">/nco_tb/out_valid</div>
<div class="t" style="left:294px;top:245px;width:82px;overflow:hidden;font-size:8.85px;color:#F4F4F4">St1</div>
<svg class="a" style="left:166px;top:380px;" width="32" height="11" viewBox="0 0 32 11"><path d="M1 6 L4 3 M4 3 H6 M1 6 H3" stroke="#C8C8C8" stroke-width="1" fill="none"/><rect x="10" y="2" width="8" height="7" fill="#A8C8F0" stroke="#6A8AC0" stroke-width="0.8"/><circle cx="24.5" cy="5.5" r="4.5" fill="#3AA040"/><rect x="22" y="5" width="5" height="1.2" fill="#E0F8E0"/><rect x="23.9" y="3" width="1.2" height="5" fill="#E0F8E0"/></svg>
<svg class="a" style="left:168px;top:395px;" width="32" height="12" viewBox="0 0 32 12"><path d="M3.5 5.5 V3 Q6 0 8.5 3 V5.5" stroke="#9A9680" stroke-width="1.3" fill="none"/><rect x="1.5" y="5.5" width="9" height="6" fill="#F0C850"/><rect x="1.5" y="11" width="9" height="1" fill="#B08828"/><rect x="3" y="7.5" width="6" height="1" fill="#D8A838"/><rect x="3" y="9.5" width="6" height="1" fill="#D8A838"/><path d="M12 11 L19 3" stroke="#4A70C8" stroke-width="2"/><path d="M18 1 L20 3 L18.5 5" stroke="#6A90E0" stroke-width="1.2" fill="none"/><circle cx="25.5" cy="6" r="4.5" fill="#D84040"/><rect x="23" y="5.4" width="5" height="1.3" fill="#F8E0E0"/></svg>
<svg class="a" style="left:168px;top:409px;" width="32" height="12" viewBox="0 0 32 12"><path d="M3.5 5.5 V3 Q6 0 8.5 3 V5.5" stroke="#9A9680" stroke-width="1.3" fill="none"/><rect x="1.5" y="5.5" width="9" height="6" fill="#F0C850"/><rect x="1.5" y="11" width="9" height="1" fill="#B08828"/><rect x="3" y="7.5" width="6" height="1" fill="#D8A838"/><rect x="3" y="9.5" width="6" height="1" fill="#D8A838"/><path d="M12 11 L19 3" stroke="#4A70C8" stroke-width="2"/><path d="M18 1 L20 3 L18.5 5" stroke="#6A90E0" stroke-width="1.2" fill="none"/><circle cx="25.5" cy="6" r="4.5" fill="#D84040"/><rect x="23" y="5.4" width="5" height="1.3" fill="#F8E0E0"/></svg>
<svg class="a" style="left:168px;top:423px;" width="32" height="12" viewBox="0 0 32 12"><path d="M3.5 5.5 V3 Q6 0 8.5 3 V5.5" stroke="#9A9680" stroke-width="1.3" fill="none"/><rect x="1.5" y="5.5" width="9" height="6" fill="#F0C850"/><rect x="1.5" y="11" width="9" height="1" fill="#B08828"/><rect x="3" y="7.5" width="6" height="1" fill="#D8A838"/><rect x="3" y="9.5" width="6" height="1" fill="#D8A838"/><path d="M12 11 L19 3" stroke="#4A70C8" stroke-width="2"/><path d="M18 1 L20 3 L18.5 5" stroke="#6A90E0" stroke-width="1.2" fill="none"/><circle cx="25.5" cy="6" r="4.5" fill="#D84040"/><rect x="23" y="5.4" width="5" height="1.3" fill="#F8E0E0"/></svg>
<div class="a" style="left:199px;top:408px;width:92px;height:14px;background:#fff;"></div>
<div class="a" style="left:293px;top:408px;width:83px;height:14px;background:#fff;"></div>
<div class="t" style="right:742px;top:380px;font-size:9px;color:#F4F4F4;">Now</div>
<div class="t" style="right:742px;top:397px;font-size:9px;color:#F4F4F4;">Cursor 1</div>
<div class="t" style="right:742px;top:411px;font-size:9px;color:#000;">Cursor 3</div>
<div class="t" style="right:742px;top:425px;font-size:9px;color:#F4F4F4;">Cursor 4</div>
<div class="t" style="right:656px;top:380px;font-size:8.8px;color:#F4F4F4;">10000000 ps</div>
<div class="t" style="right:656px;top:397px;font-size:8.8px;color:#F4F4F4;">9999175 ps</div>
<div class="t" style="right:656px;top:411px;font-size:8.8px;color:#000;">405000 ps</div>
<div class="t" style="right:656px;top:425px;font-size:8.8px;color:#F4F4F4;">1405000 ps</div>
<svg width="1024" height="467" viewBox="0 0 1024 467" style="position:absolute;left:0;top:0">
<defs><clipPath id="wc"><rect x="378" y="45" width="646" height="392"/></clipPath></defs>
<g clip-path="url(#wc)" shape-rendering="crispEdges">
<rect x="427" y="63" width="1" height="311" fill="#7a7a7a"/>
<rect x="476" y="63" width="1" height="311" fill="#7a7a7a"/>
<rect x="526" y="63" width="1" height="311" fill="#7a7a7a"/>
<rect x="575" y="63" width="1" height="311" fill="#7a7a7a"/>
<rect x="625" y="63" width="1" height="311" fill="#7a7a7a"/>
<rect x="675" y="63" width="1" height="311" fill="#7a7a7a"/>
<rect x="724" y="63" width="1" height="311" fill="#7a7a7a"/>
<rect x="774" y="63" width="1" height="311" fill="#7a7a7a"/>
<rect x="823" y="63" width="1" height="311" fill="#7a7a7a"/>
<rect x="873" y="63" width="1" height="311" fill="#7a7a7a"/>
<rect x="922" y="63" width="1" height="311" fill="#7a7a7a"/>
<rect x="972" y="63" width="1" height="311" fill="#7a7a7a"/>
<rect x="1021" y="63" width="1" height="311" fill="#7a7a7a"/>
<rect x="378" y="66" width="646" height="11" fill="#12B812"/>
<rect x="380" y="66" width="1" height="11" fill="#5AEF5A"/>
<rect x="382" y="66" width="1" height="11" fill="#5AEF5A"/>
<rect x="384" y="66" width="1" height="11" fill="#5AEF5A"/>
<rect x="387" y="66" width="1" height="11" fill="#5AEF5A"/>
<rect x="389" y="66" width="1" height="11" fill="#5AEF5A"/>
<rect x="392" y="66" width="1" height="11" fill="#5AEF5A"/>
<rect x="394" y="66" width="1" height="11" fill="#5AEF5A"/>
<rect x="397" y="66" width="1" height="11" fill="#5AEF5A"/>
<rect x="399" y="66" width="1" height="11" fill="#5AEF5A"/>
<rect x="402" y="66" width="1" height="11" fill="#5AEF5A"/>
<rect x="404" y="66" width="1" height="11" fill="#5AEF5A"/>
<rect x="407" y="66" width="1" height="11" fill="#5AEF5A"/>
<rect x="409" y="66" width="1" height="11" fill="#5AEF5A"/>
<rect x="412" y="66" width="1" height="11" fill="#5AEF5A"/>
<rect x="414" y="66" width="1" height="11" fill="#5AEF5A"/>
<rect x="417" y="66" width="1" height="11" fill="#5AEF5A"/>
<rect x="419" y="66" width="1" height="11" fill="#5AEF5A"/>
<rect x="422" y="66" width="1" height="11" fill="#5AEF5A"/>
<rect x="424" y="66" width="1" height="11" fill="#5AEF5A"/>
<rect x="427" y="66" width="1" height="11" fill="#5AEF5A"/>
<rect x="429" y="66" width="1" height="11" fill="#5AEF5A"/>
<rect x="432" y="66" width="1" height="11" fill="#5AEF5A"/>
<rect x="434" y="66" width="1" height="11" fill="#5AEF5A"/>
<rect x="436" y="66" width="1" height="11" fill="#5AEF5A"/>
<rect x="439" y="66" width="1" height="11" fill="#5AEF5A"/>
<rect x="441" y="66" width="1" height="11" fill="#5AEF5A"/>
<rect x="444" y="66" width="1" height="11" fill="#5AEF5A"/>
<rect x="446" y="66" width="1" height="11" fill="#5AEF5A"/>
<rect x="449" y="66" width="1" height="11" fill="#5AEF5A"/>
<rect x="451" y="66" width="1" height="11" fill="#5AEF5A"/>
<rect x="454" y="66" width="1" height="11" fill="#5AEF5A"/>
<rect x="456" y="66" width="1" height="11" fill="#5AEF5A"/>
<rect x="459" y="66" width="1" height="11" fill="#5AEF5A"/>
<rect x="461" y="66" width="1" height="11" fill="#5AEF5A"/>
<rect x="464" y="66" width="1" height="11" fill="#5AEF5A"/>
<rect x="466" y="66" width="1" height="11" fill="#5AEF5A"/>
<rect x="469" y="66" width="1" height="11" fill="#5AEF5A"/>
<rect x="471" y="66" width="1" height="11" fill="#5AEF5A"/>
<rect x="474" y="66" width="1" height="11" fill="#5AEF5A"/>
<rect x="476" y="66" width="1" height="11" fill="#5AEF5A"/>
<rect x="479" y="66" width="1" height="11" fill="#5AEF5A"/>
<rect x="481" y="66" width="1" height="11" fill="#5AEF5A"/>
<rect x="484" y="66" width="1" height="11" fill="#5AEF5A"/>
<rect x="486" y="66" width="1" height="11" fill="#5AEF5A"/>
<rect x="488" y="66" width="1" height="11" fill="#5AEF5A"/>
<rect x="491" y="66" width="1" height="11" fill="#5AEF5A"/>
<rect x="493" y="66" width="1" height="11" fill="#5AEF5A"/>
<rect x="496" y="66" width="1" height="11" fill="#5AEF5A"/>
<rect x="498" y="66" width="1" height="11" fill="#5AEF5A"/>
<rect x="501" y="66" width="1" height="11" fill="#5AEF5A"/>
<rect x="503" y="66" width="1" height="11" fill="#5AEF5A"/>
<rect x="506" y="66" width="1" height="11" fill="#5AEF5A"/>
<rect x="508" y="66" width="1" height="11" fill="#5AEF5A"/>
<rect x="511" y="66" width="1" height="11" fill="#5AEF5A"/>
<rect x="513" y="66" width="1" height="11" fill="#5AEF5A"/>
<rect x="516" y="66" width="1" height="11" fill="#5AEF5A"/>
<rect x="518" y="66" width="1" height="11" fill="#5AEF5A"/>
<rect x="521" y="66" width="1" height="11" fill="#5AEF5A"/>
<rect x="523" y="66" width="1" height="11" fill="#5AEF5A"/>
<rect x="526" y="66" width="1" height="11" fill="#5AEF5A"/>
<rect x="528" y="66" width="1" height="11" fill="#5AEF5A"/>
<rect x="531" y="66" width="1" height="11" fill="#5AEF5A"/>
<rect x="533" y="66" width="1" height="11" fill="#5AEF5A"/>
<rect x="536" y="66" width="1" height="11" fill="#5AEF5A"/>
<rect x="538" y="66" width="1" height="11" fill="#5AEF5A"/>
<rect x="541" y="66" width="1" height="11" fill="#5AEF5A"/>
<rect x="543" y="66" width="1" height="11" fill="#5AEF5A"/>
<rect x="545" y="66" width="1" height="11" fill="#5AEF5A"/>
<rect x="548" y="66" width="1" height="11" fill="#5AEF5A"/>
<rect x="550" y="66" width="1" height="11" fill="#5AEF5A"/>
<rect x="553" y="66" width="1" height="11" fill="#5AEF5A"/>
<rect x="555" y="66" width="1" height="11" fill="#5AEF5A"/>
<rect x="558" y="66" width="1" height="11" fill="#5AEF5A"/>
<rect x="560" y="66" width="1" height="11" fill="#5AEF5A"/>
<rect x="563" y="66" width="1" height="11" fill="#5AEF5A"/>
<rect x="565" y="66" width="1" height="11" fill="#5AEF5A"/>
<rect x="568" y="66" width="1" height="11" fill="#5AEF5A"/>
<rect x="570" y="66" width="1" height="11" fill="#5AEF5A"/>
<rect x="573" y="66" width="1" height="11" fill="#5AEF5A"/>
<rect x="575" y="66" width="1" height="11" fill="#5AEF5A"/>
<rect x="578" y="66" width="1" height="11" fill="#5AEF5A"/>
<rect x="580" y="66" width="1" height="11" fill="#5AEF5A"/>
<rect x="583" y="66" width="1" height="11" fill="#5AEF5A"/>
<rect x="585" y="66" width="1" height="11" fill="#5AEF5A"/>
<rect x="588" y="66" width="1" height="11" fill="#5AEF5A"/>
<rect x="590" y="66" width="1" height="11" fill="#5AEF5A"/>
<rect x="593" y="66" width="1" height="11" fill="#5AEF5A"/>
<rect x="595" y="66" width="1" height="11" fill="#5AEF5A"/>
<rect x="597" y="66" width="1" height="11" fill="#5AEF5A"/>
<rect x="600" y="66" width="1" height="11" fill="#5AEF5A"/>
<rect x="602" y="66" width="1" height="11" fill="#5AEF5A"/>
<rect x="605" y="66" width="1" height="11" fill="#5AEF5A"/>
<rect x="607" y="66" width="1" height="11" fill="#5AEF5A"/>
<rect x="610" y="66" width="1" height="11" fill="#5AEF5A"/>
<rect x="612" y="66" width="1" height="11" fill="#5AEF5A"/>
<rect x="615" y="66" width="1" height="11" fill="#5AEF5A"/>
<rect x="617" y="66" width="1" height="11" fill="#5AEF5A"/>
<rect x="620" y="66" width="1" height="11" fill="#5AEF5A"/>
<rect x="622" y="66" width="1" height="11" fill="#5AEF5A"/>
<rect x="625" y="66" width="1" height="11" fill="#5AEF5A"/>
<rect x="627" y="66" width="1" height="11" fill="#5AEF5A"/>
<rect x="630" y="66" width="1" height="11" fill="#5AEF5A"/>
<rect x="632" y="66" width="1" height="11" fill="#5AEF5A"/>
<rect x="635" y="66" width="1" height="11" fill="#5AEF5A"/>
<rect x="637" y="66" width="1" height="11" fill="#5AEF5A"/>
<rect x="640" y="66" width="1" height="11" fill="#5AEF5A"/>
<rect x="642" y="66" width="1" height="11" fill="#5AEF5A"/>
<rect x="645" y="66" width="1" height="11" fill="#5AEF5A"/>
<rect x="647" y="66" width="1" height="11" fill="#5AEF5A"/>
<rect x="650" y="66" width="1" height="11" fill="#5AEF5A"/>
<rect x="652" y="66" width="1" height="11" fill="#5AEF5A"/>
<rect x="654" y="66" width="1" height="11" fill="#5AEF5A"/>
<rect x="657" y="66" width="1" height="11" fill="#5AEF5A"/>
<rect x="659" y="66" width="1" height="11" fill="#5AEF5A"/>
<rect x="662" y="66" width="1" height="11" fill="#5AEF5A"/>
<rect x="664" y="66" width="1" height="11" fill="#5AEF5A"/>
<rect x="667" y="66" width="1" height="11" fill="#5AEF5A"/>
<rect x="669" y="66" width="1" height="11" fill="#5AEF5A"/>
<rect x="672" y="66" width="1" height="11" fill="#5AEF5A"/>
<rect x="674" y="66" width="1" height="11" fill="#5AEF5A"/>
<rect x="677" y="66" width="1" height="11" fill="#5AEF5A"/>
<rect x="679" y="66" width="1" height="11" fill="#5AEF5A"/>
<rect x="682" y="66" width="1" height="11" fill="#5AEF5A"/>
<rect x="684" y="66" width="1" height="11" fill="#5AEF5A"/>
<rect x="687" y="66" width="1" height="11" fill="#5AEF5A"/>
<rect x="689" y="66" width="1" height="11" fill="#5AEF5A"/>
<rect x="692" y="66" width="1" height="11" fill="#5AEF5A"/>
<rect x="694" y="66" width="1" height="11" fill="#5AEF5A"/>
<rect x="697" y="66" width="1" height="11" fill="#5AEF5A"/>
<rect x="699" y="66" width="1" height="11" fill="#5AEF5A"/>
<rect x="702" y="66" width="1" height="11" fill="#5AEF5A"/>
<rect x="704" y="66" width="1" height="11" fill="#5AEF5A"/>
<rect x="706" y="66" width="1" height="11" fill="#5AEF5A"/>
<rect x="709" y="66" width="1" height="11" fill="#5AEF5A"/>
<rect x="711" y="66" width="1" height="11" fill="#5AEF5A"/>
<rect x="714" y="66" width="1" height="11" fill="#5AEF5A"/>
<rect x="716" y="66" width="1" height="11" fill="#5AEF5A"/>
<rect x="719" y="66" width="1" height="11" fill="#5AEF5A"/>
<rect x="721" y="66" width="1" height="11" fill="#5AEF5A"/>
<rect x="724" y="66" width="1" height="11" fill="#5AEF5A"/>
<rect x="726" y="66" width="1" height="11" fill="#5AEF5A"/>
<rect x="729" y="66" width="1" height="11" fill="#5AEF5A"/>
<rect x="731" y="66" width="1" height="11" fill="#5AEF5A"/>
<rect x="734" y="66" width="1" height="11" fill="#5AEF5A"/>
<rect x="736" y="66" width="1" height="11" fill="#5AEF5A"/>
<rect x="739" y="66" width="1" height="11" fill="#5AEF5A"/>
<rect x="741" y="66" width="1" height="11" fill="#5AEF5A"/>
<rect x="744" y="66" width="1" height="11" fill="#5AEF5A"/>
<rect x="746" y="66" width="1" height="11" fill="#5AEF5A"/>
<rect x="749" y="66" width="1" height="11" fill="#5AEF5A"/>
<rect x="751" y="66" width="1" height="11" fill="#5AEF5A"/>
<rect x="754" y="66" width="1" height="11" fill="#5AEF5A"/>
<rect x="756" y="66" width="1" height="11" fill="#5AEF5A"/>
<rect x="759" y="66" width="1" height="11" fill="#5AEF5A"/>
<rect x="761" y="66" width="1" height="11" fill="#5AEF5A"/>
<rect x="763" y="66" width="1" height="11" fill="#5AEF5A"/>
<rect x="766" y="66" width="1" height="11" fill="#5AEF5A"/>
<rect x="768" y="66" width="1" height="11" fill="#5AEF5A"/>
<rect x="771" y="66" width="1" height="11" fill="#5AEF5A"/>
<rect x="773" y="66" width="1" height="11" fill="#5AEF5A"/>
<rect x="776" y="66" width="1" height="11" fill="#5AEF5A"/>
<rect x="778" y="66" width="1" height="11" fill="#5AEF5A"/>
<rect x="781" y="66" width="1" height="11" fill="#5AEF5A"/>
<rect x="783" y="66" width="1" height="11" fill="#5AEF5A"/>
<rect x="786" y="66" width="1" height="11" fill="#5AEF5A"/>
<rect x="788" y="66" width="1" height="11" fill="#5AEF5A"/>
<rect x="791" y="66" width="1" height="11" fill="#5AEF5A"/>
<rect x="793" y="66" width="1" height="11" fill="#5AEF5A"/>
<rect x="796" y="66" width="1" height="11" fill="#5AEF5A"/>
<rect x="798" y="66" width="1" height="11" fill="#5AEF5A"/>
<rect x="801" y="66" width="1" height="11" fill="#5AEF5A"/>
<rect x="803" y="66" width="1" height="11" fill="#5AEF5A"/>
<rect x="806" y="66" width="1" height="11" fill="#5AEF5A"/>
<rect x="808" y="66" width="1" height="11" fill="#5AEF5A"/>
<rect x="810" y="66" width="1" height="11" fill="#5AEF5A"/>
<rect x="813" y="66" width="1" height="11" fill="#5AEF5A"/>
<rect x="815" y="66" width="1" height="11" fill="#5AEF5A"/>
<rect x="818" y="66" width="1" height="11" fill="#5AEF5A"/>
<rect x="820" y="66" width="1" height="11" fill="#5AEF5A"/>
<rect x="823" y="66" width="1" height="11" fill="#5AEF5A"/>
<rect x="825" y="66" width="1" height="11" fill="#5AEF5A"/>
<rect x="828" y="66" width="1" height="11" fill="#5AEF5A"/>
<rect x="830" y="66" width="1" height="11" fill="#5AEF5A"/>
<rect x="833" y="66" width="1" height="11" fill="#5AEF5A"/>
<rect x="835" y="66" width="1" height="11" fill="#5AEF5A"/>
<rect x="838" y="66" width="1" height="11" fill="#5AEF5A"/>
<rect x="840" y="66" width="1" height="11" fill="#5AEF5A"/>
<rect x="843" y="66" width="1" height="11" fill="#5AEF5A"/>
<rect x="845" y="66" width="1" height="11" fill="#5AEF5A"/>
<rect x="848" y="66" width="1" height="11" fill="#5AEF5A"/>
<rect x="850" y="66" width="1" height="11" fill="#5AEF5A"/>
<rect x="853" y="66" width="1" height="11" fill="#5AEF5A"/>
<rect x="855" y="66" width="1" height="11" fill="#5AEF5A"/>
<rect x="858" y="66" width="1" height="11" fill="#5AEF5A"/>
<rect x="860" y="66" width="1" height="11" fill="#5AEF5A"/>
<rect x="863" y="66" width="1" height="11" fill="#5AEF5A"/>
<rect x="865" y="66" width="1" height="11" fill="#5AEF5A"/>
<rect x="867" y="66" width="1" height="11" fill="#5AEF5A"/>
<rect x="870" y="66" width="1" height="11" fill="#5AEF5A"/>
<rect x="872" y="66" width="1" height="11" fill="#5AEF5A"/>
<rect x="875" y="66" width="1" height="11" fill="#5AEF5A"/>
<rect x="877" y="66" width="1" height="11" fill="#5AEF5A"/>
<rect x="880" y="66" width="1" height="11" fill="#5AEF5A"/>
<rect x="882" y="66" width="1" height="11" fill="#5AEF5A"/>
<rect x="885" y="66" width="1" height="11" fill="#5AEF5A"/>
<rect x="887" y="66" width="1" height="11" fill="#5AEF5A"/>
<rect x="890" y="66" width="1" height="11" fill="#5AEF5A"/>
<rect x="892" y="66" width="1" height="11" fill="#5AEF5A"/>
<rect x="895" y="66" width="1" height="11" fill="#5AEF5A"/>
<rect x="897" y="66" width="1" height="11" fill="#5AEF5A"/>
<rect x="900" y="66" width="1" height="11" fill="#5AEF5A"/>
<rect x="902" y="66" width="1" height="11" fill="#5AEF5A"/>
<rect x="905" y="66" width="1" height="11" fill="#5AEF5A"/>
<rect x="907" y="66" width="1" height="11" fill="#5AEF5A"/>
<rect x="910" y="66" width="1" height="11" fill="#5AEF5A"/>
<rect x="912" y="66" width="1" height="11" fill="#5AEF5A"/>
<rect x="915" y="66" width="1" height="11" fill="#5AEF5A"/>
<rect x="917" y="66" width="1" height="11" fill="#5AEF5A"/>
<rect x="919" y="66" width="1" height="11" fill="#5AEF5A"/>
<rect x="922" y="66" width="1" height="11" fill="#5AEF5A"/>
<rect x="924" y="66" width="1" height="11" fill="#5AEF5A"/>
<rect x="927" y="66" width="1" height="11" fill="#5AEF5A"/>
<rect x="929" y="66" width="1" height="11" fill="#5AEF5A"/>
<rect x="932" y="66" width="1" height="11" fill="#5AEF5A"/>
<rect x="934" y="66" width="1" height="11" fill="#5AEF5A"/>
<rect x="937" y="66" width="1" height="11" fill="#5AEF5A"/>
<rect x="939" y="66" width="1" height="11" fill="#5AEF5A"/>
<rect x="942" y="66" width="1" height="11" fill="#5AEF5A"/>
<rect x="944" y="66" width="1" height="11" fill="#5AEF5A"/>
<rect x="947" y="66" width="1" height="11" fill="#5AEF5A"/>
<rect x="949" y="66" width="1" height="11" fill="#5AEF5A"/>
<rect x="952" y="66" width="1" height="11" fill="#5AEF5A"/>
<rect x="954" y="66" width="1" height="11" fill="#5AEF5A"/>
<rect x="957" y="66" width="1" height="11" fill="#5AEF5A"/>
<rect x="959" y="66" width="1" height="11" fill="#5AEF5A"/>
<rect x="962" y="66" width="1" height="11" fill="#5AEF5A"/>
<rect x="964" y="66" width="1" height="11" fill="#5AEF5A"/>
<rect x="967" y="66" width="1" height="11" fill="#5AEF5A"/>
<rect x="969" y="66" width="1" height="11" fill="#5AEF5A"/>
<rect x="972" y="66" width="1" height="11" fill="#5AEF5A"/>
<rect x="974" y="66" width="1" height="11" fill="#5AEF5A"/>
<rect x="976" y="66" width="1" height="11" fill="#5AEF5A"/>
<rect x="979" y="66" width="1" height="11" fill="#5AEF5A"/>
<rect x="981" y="66" width="1" height="11" fill="#5AEF5A"/>
<rect x="984" y="66" width="1" height="11" fill="#5AEF5A"/>
<rect x="986" y="66" width="1" height="11" fill="#5AEF5A"/>
<rect x="989" y="66" width="1" height="11" fill="#5AEF5A"/>
<rect x="991" y="66" width="1" height="11" fill="#5AEF5A"/>
<rect x="994" y="66" width="1" height="11" fill="#5AEF5A"/>
<rect x="996" y="66" width="1" height="11" fill="#5AEF5A"/>
<rect x="999" y="66" width="1" height="11" fill="#5AEF5A"/>
<rect x="1001" y="66" width="1" height="11" fill="#5AEF5A"/>
<rect x="1004" y="66" width="1" height="11" fill="#5AEF5A"/>
<rect x="1006" y="66" width="1" height="11" fill="#5AEF5A"/>
<rect x="1009" y="66" width="1" height="11" fill="#5AEF5A"/>
<rect x="1011" y="66" width="1" height="11" fill="#5AEF5A"/>
<rect x="1014" y="66" width="1" height="11" fill="#5AEF5A"/>
<rect x="1016" y="66" width="1" height="11" fill="#5AEF5A"/>
<rect x="1019" y="66" width="1" height="11" fill="#5AEF5A"/>
<rect x="1021" y="66" width="1" height="11" fill="#5AEF5A"/>
<rect x="378" y="76" width="646" height="1" fill="#48E048"/>
<path d="M378 90.5 H379.5 V80.5 H1024" stroke="#40B840" fill="none"/>
<rect x="378" y="94" width="646" height="1" fill="#40B840"/>
<rect x="378" y="108" width="646" height="1" fill="#86A886"/>
<rect x="378" y="118" width="646" height="1" fill="#86A886"/>
<path d="M378 255.5 H406.5 V245.5 H1024" stroke="#40B840" fill="none"/>
</g>
<g clip-path="url(#wc)" fill="none" stroke="#C0D8B8" stroke-width="1" shape-rendering="crispEdges">
<path d="M378 151.5H408.5V150.5H410.5V149.5H411.5V148.5H413.5V147.5H414.5V146.5H415.5V145.5H417.5V144.5H418.5V143.5H420.5V142.5H421.5V141.5H422.5V140.5H424.5V139.5H425.5V138.5H427.5V137.5H429.5V136.5H430.5V135.5H432.5V134.5H434.5V133.5H435.5V132.5H437.5V131.5H439.5V130.5H441.5V129.5H443.5V128.5H446.5V127.5H448.5V126.5H451.5V125.5H454.5V124.5H458.5V123.5H465.5V122.5H474.5V123.5H481.5V124.5H485.5V125.5H489.5V126.5H491.5V127.5H494.5V128.5H496.5V129.5H498.5V130.5H500.5V131.5H502.5V132.5H504.5V133.5H506.5V134.5H508.5V135.5H509.5V136.5H511.5V137.5H512.5V138.5H514.5V139.5H515.5V140.5H517.5V141.5H518.5V142.5H520.5V143.5H521.5V144.5H523.5V145.5H524.5V146.5H525.5V147.5H527.5V148.5H528.5V149.5H530.5V150.5H531.5V151.5H532.5V152.5H534.5V153.5H535.5V154.5H537.5V155.5H538.5V156.5H539.5V157.5H541.5V158.5H542.5V159.5H544.5V160.5H545.5V161.5H546.5V162.5H548.5V163.5H549.5V164.5H551.5V165.5H553.5V166.5H554.5V167.5H556.5V168.5H558.5V169.5H559.5V170.5H561.5V171.5H563.5V172.5H565.5V173.5H567.5V174.5H570.5V175.5H572.5V176.5H575.5V177.5H578.5V178.5H582.5V179.5H589.5V180.5H598.5V179.5H605.5V178.5H609.5V177.5H613.5V176.5H615.5V175.5H618.5V174.5H620.5V173.5H622.5V172.5H624.5V171.5H626.5V170.5H628.5V169.5H630.5V168.5H632.5V167.5H633.5V166.5H635.5V165.5H636.5V164.5H638.5V163.5H639.5V162.5H641.5V161.5H642.5V160.5H644.5V159.5H645.5V158.5H647.5V157.5H648.5V156.5H649.5V155.5H651.5V154.5H652.5V153.5H654.5V152.5H655.5V151.5H656.5V150.5H658.5V149.5H659.5V148.5H661.5V147.5H662.5V146.5H663.5V145.5H665.5V144.5H666.5V143.5H668.5V142.5H669.5V141.5H670.5V140.5H672.5V139.5H673.5V138.5H675.5V137.5H677.5V136.5H678.5V135.5H680.5V134.5H682.5V133.5H683.5V132.5H685.5V131.5H687.5V130.5H689.5V129.5H691.5V128.5H694.5V127.5H696.5V126.5H699.5V125.5H702.5V124.5H706.5V123.5H713.5V122.5H722.5V123.5H729.5V124.5H733.5V125.5H737.5V126.5H739.5V127.5H742.5V128.5H744.5V129.5H746.5V130.5H748.5V131.5H750.5V132.5H752.5V133.5H754.5V134.5H756.5V135.5H757.5V136.5H759.5V137.5H760.5V138.5H762.5V139.5H763.5V140.5H765.5V141.5H766.5V142.5H768.5V143.5H769.5V144.5H771.5V145.5H772.5V146.5H773.5V147.5H775.5V148.5H776.5V149.5H778.5V150.5H779.5V151.5H780.5V152.5H782.5V153.5H783.5V154.5H785.5V155.5H786.5V156.5H787.5V157.5H789.5V158.5H790.5V159.5H792.5V160.5H793.5V161.5H794.5V162.5H796.5V163.5H797.5V164.5H799.5V165.5H801.5V166.5H802.5V167.5H804.5V168.5H806.5V169.5H807.5V170.5H809.5V171.5H811.5V172.5H813.5V173.5H815.5V174.5H818.5V175.5H820.5V176.5H823.5V177.5H826.5V178.5H830.5V179.5H837.5V180.5H846.5V179.5H853.5V178.5H857.5V177.5H861.5V176.5H863.5V175.5H866.5V174.5H868.5V173.5H870.5V172.5H872.5V171.5H874.5V170.5H876.5V169.5H878.5V168.5H880.5V167.5H881.5V166.5H883.5V165.5H884.5V164.5H886.5V163.5H887.5V162.5H889.5V161.5H890.5V160.5H892.5V159.5H893.5V158.5H895.5V157.5H896.5V156.5H897.5V155.5H899.5V154.5H900.5V153.5H902.5V152.5H903.5V151.5H904.5V150.5H906.5V149.5H907.5V148.5H909.5V147.5H910.5V146.5H911.5V145.5H913.5V144.5H914.5V143.5H916.5V142.5H917.5V141.5H918.5V140.5H920.5V139.5H921.5V138.5H923.5V137.5H925.5V136.5H926.5V135.5H928.5V134.5H930.5V133.5H931.5V132.5H933.5V131.5H935.5V130.5H937.5V129.5H939.5V128.5H942.5V127.5H944.5V126.5H947.5V125.5H950.5V124.5H954.5V123.5H961.5V122.5H970.5V123.5H977.5V124.5H981.5V125.5H985.5V126.5H987.5V127.5H990.5V128.5H992.5V129.5H994.5V130.5H996.5V131.5H998.5V132.5H1000.5V133.5H1002.5V134.5H1004.5V135.5H1005.5V136.5H1007.5V137.5H1008.5V138.5H1010.5V139.5H1011.5V140.5H1013.5V141.5H1014.5V142.5H1016.5V143.5H1017.5V144.5H1019.5V145.5H1020.5V146.5H1021.5V147.5H1023.5V148.5H1024.5V149.5H1025"/>
<path d="M378 212.5H398.5V184.5H417.5V185.5H422.5V186.5H425.5V187.5H428.5V188.5H431.5V189.5H433.5V190.5H435.5V191.5H438.5V192.5H439.5V193.5H441.5V194.5H443.5V195.5H445.5V196.5H447.5V197.5H448.5V198.5H450.5V199.5H451.5V200.5H453.5V201.5H454.5V202.5H456.5V203.5H457.5V204.5H459.5V205.5H460.5V206.5H462.5V207.5H463.5V208.5H464.5V209.5H466.5V210.5H467.5V211.5H468.5V212.5H470.5V213.5H471.5V214.5H473.5V215.5H474.5V216.5H475.5V217.5H477.5V218.5H478.5V219.5H480.5V220.5H481.5V221.5H482.5V222.5H484.5V223.5H485.5V224.5H487.5V225.5H488.5V226.5H490.5V227.5H492.5V228.5H493.5V229.5H495.5V230.5H497.5V231.5H498.5V232.5H500.5V233.5H502.5V234.5H504.5V235.5H507.5V236.5H509.5V237.5H512.5V238.5H515.5V239.5H518.5V240.5H524.5V241.5H540.5V240.5H545.5V239.5H549.5V238.5H552.5V237.5H554.5V236.5H557.5V235.5H559.5V234.5H561.5V233.5H563.5V232.5H565.5V231.5H567.5V230.5H569.5V229.5H570.5V228.5H572.5V227.5H573.5V226.5H575.5V225.5H577.5V224.5H578.5V223.5H580.5V222.5H581.5V221.5H582.5V220.5H584.5V219.5H585.5V218.5H587.5V217.5H588.5V216.5H589.5V215.5H591.5V214.5H592.5V213.5H594.5V212.5H595.5V211.5H596.5V210.5H598.5V209.5H599.5V208.5H600.5V207.5H602.5V206.5H603.5V205.5H605.5V204.5H606.5V203.5H608.5V202.5H609.5V201.5H611.5V200.5H612.5V199.5H614.5V198.5H615.5V197.5H617.5V196.5H619.5V195.5H620.5V194.5H622.5V193.5H624.5V192.5H626.5V191.5H628.5V190.5H630.5V189.5H633.5V188.5H635.5V187.5H638.5V186.5H642.5V185.5H646.5V184.5H665.5V185.5H670.5V186.5H673.5V187.5H676.5V188.5H679.5V189.5H681.5V190.5H683.5V191.5H686.5V192.5H687.5V193.5H689.5V194.5H691.5V195.5H693.5V196.5H695.5V197.5H696.5V198.5H698.5V199.5H699.5V200.5H701.5V201.5H702.5V202.5H704.5V203.5H705.5V204.5H707.5V205.5H708.5V206.5H710.5V207.5H711.5V208.5H712.5V209.5H714.5V210.5H715.5V211.5H716.5V212.5H718.5V213.5H719.5V214.5H721.5V215.5H722.5V216.5H723.5V217.5H725.5V218.5H726.5V219.5H728.5V220.5H729.5V221.5H730.5V222.5H732.5V223.5H733.5V224.5H735.5V225.5H736.5V226.5H738.5V227.5H740.5V228.5H741.5V229.5H743.5V230.5H745.5V231.5H746.5V232.5H748.5V233.5H750.5V234.5H752.5V235.5H755.5V236.5H757.5V237.5H760.5V238.5H763.5V239.5H766.5V240.5H772.5V241.5H788.5V240.5H793.5V239.5H797.5V238.5H800.5V237.5H802.5V236.5H805.5V235.5H807.5V234.5H809.5V233.5H811.5V232.5H813.5V231.5H815.5V230.5H817.5V229.5H818.5V228.5H820.5V227.5H821.5V226.5H823.5V225.5H825.5V224.5H826.5V223.5H828.5V222.5H829.5V221.5H830.5V220.5H832.5V219.5H833.5V218.5H835.5V217.5H836.5V216.5H837.5V215.5H839.5V214.5H840.5V213.5H842.5V212.5H843.5V211.5H844.5V210.5H846.5V209.5H847.5V208.5H848.5V207.5H850.5V206.5H851.5V205.5H853.5V204.5H854.5V203.5H856.5V202.5H857.5V201.5H859.5V200.5H860.5V199.5H862.5V198.5H863.5V197.5H865.5V196.5H867.5V195.5H868.5V194.5H870.5V193.5H872.5V192.5H874.5V191.5H876.5V190.5H878.5V189.5H881.5V188.5H883.5V187.5H886.5V186.5H890.5V185.5H894.5V184.5H913.5V185.5H918.5V186.5H921.5V187.5H924.5V188.5H927.5V189.5H929.5V190.5H931.5V191.5H934.5V192.5H935.5V193.5H937.5V194.5H939.5V195.5H941.5V196.5H943.5V197.5H944.5V198.5H946.5V199.5H947.5V200.5H949.5V201.5H950.5V202.5H952.5V203.5H953.5V204.5H955.5V205.5H956.5V206.5H958.5V207.5H959.5V208.5H960.5V209.5H962.5V210.5H963.5V211.5H964.5V212.5H966.5V213.5H967.5V214.5H969.5V215.5H970.5V216.5H971.5V217.5H973.5V218.5H974.5V219.5H976.5V220.5H977.5V221.5H978.5V222.5H980.5V223.5H981.5V224.5H983.5V225.5H984.5V226.5H986.5V227.5H988.5V228.5H989.5V229.5H991.5V230.5H993.5V231.5H994.5V232.5H996.5V233.5H998.5V234.5H1000.5V235.5H1003.5V236.5H1005.5V237.5H1008.5V238.5H1011.5V239.5H1014.5V240.5H1020.5V241.5H1025"/>
</g>
<g clip-path="url(#wc)" shape-rendering="crispEdges">
<rect x="725" y="45" width="1" height="378" fill="#A89058"/>
<rect x="477" y="45" width="3" height="364" fill="#F5CF4A"/>
<rect x="378" y="374" width="646" height="2" fill="#fff"/>
<rect x="377" y="377" width="1" height="5" fill="#1FA81F"/>
<rect x="390" y="377" width="1" height="3" fill="#1FA81F"/>
<rect x="402" y="377" width="1" height="3" fill="#1FA81F"/>
<rect x="414" y="377" width="1" height="3" fill="#1FA81F"/>
<rect x="427" y="377" width="1" height="3" fill="#1FA81F"/>
<rect x="439" y="377" width="1" height="5" fill="#1FA81F"/>
<rect x="452" y="377" width="1" height="3" fill="#1FA81F"/>
<rect x="464" y="377" width="1" height="3" fill="#1FA81F"/>
<rect x="476" y="377" width="1" height="3" fill="#1FA81F"/>
<rect x="489" y="377" width="1" height="3" fill="#1FA81F"/>
<rect x="501" y="377" width="1" height="5" fill="#1FA81F"/>
<rect x="514" y="377" width="1" height="3" fill="#1FA81F"/>
<rect x="526" y="377" width="1" height="3" fill="#1FA81F"/>
<rect x="538" y="377" width="1" height="3" fill="#1FA81F"/>
<rect x="551" y="377" width="1" height="3" fill="#1FA81F"/>
<rect x="563" y="377" width="1" height="5" fill="#1FA81F"/>
<rect x="575" y="377" width="1" height="3" fill="#1FA81F"/>
<rect x="588" y="377" width="1" height="3" fill="#1FA81F"/>
<rect x="600" y="377" width="1" height="3" fill="#1FA81F"/>
<rect x="613" y="377" width="1" height="3" fill="#1FA81F"/>
<rect x="625" y="377" width="1" height="5" fill="#1FA81F"/>
<rect x="637" y="377" width="1" height="3" fill="#1FA81F"/>
<rect x="650" y="377" width="1" height="3" fill="#1FA81F"/>
<rect x="662" y="377" width="1" height="3" fill="#1FA81F"/>
<rect x="675" y="377" width="1" height="3" fill="#1FA81F"/>
<rect x="687" y="377" width="1" height="5" fill="#1FA81F"/>
<rect x="699" y="377" width="1" height="3" fill="#1FA81F"/>
<rect x="712" y="377" width="1" height="3" fill="#1FA81F"/>
<rect x="724" y="377" width="1" height="3" fill="#1FA81F"/>
<rect x="736" y="377" width="1" height="3" fill="#1FA81F"/>
<rect x="749" y="377" width="1" height="5" fill="#1FA81F"/>
<rect x="761" y="377" width="1" height="3" fill="#1FA81F"/>
<rect x="774" y="377" width="1" height="3" fill="#1FA81F"/>
<rect x="786" y="377" width="1" height="3" fill="#1FA81F"/>
<rect x="798" y="377" width="1" height="3" fill="#1FA81F"/>
<rect x="811" y="377" width="1" height="5" fill="#1FA81F"/>
<rect x="823" y="377" width="1" height="3" fill="#1FA81F"/>
<rect x="836" y="377" width="1" height="3" fill="#1FA81F"/>
<rect x="848" y="377" width="1" height="3" fill="#1FA81F"/>
<rect x="860" y="377" width="1" height="3" fill="#1FA81F"/>
<rect x="873" y="377" width="1" height="5" fill="#1FA81F"/>
<rect x="885" y="377" width="1" height="3" fill="#1FA81F"/>
<rect x="897" y="377" width="1" height="3" fill="#1FA81F"/>
<rect x="910" y="377" width="1" height="3" fill="#1FA81F"/>
<rect x="922" y="377" width="1" height="3" fill="#1FA81F"/>
<rect x="935" y="377" width="1" height="5" fill="#1FA81F"/>
<rect x="947" y="377" width="1" height="3" fill="#1FA81F"/>
<rect x="959" y="377" width="1" height="3" fill="#1FA81F"/>
<rect x="972" y="377" width="1" height="3" fill="#1FA81F"/>
<rect x="984" y="377" width="1" height="3" fill="#1FA81F"/>
<rect x="997" y="377" width="1" height="5" fill="#1FA81F"/>
<rect x="1009" y="377" width="1" height="3" fill="#1FA81F"/>
<rect x="1021" y="377" width="1" height="3" fill="#1FA81F"/>
<rect x="1034" y="377" width="1" height="3" fill="#1FA81F"/>
<rect x="1046" y="377" width="1" height="3" fill="#1FA81F"/>
<rect x="1058" y="377" width="1" height="5" fill="#1FA81F"/>
<rect x="1071" y="377" width="1" height="3" fill="#1FA81F"/>
<rect x="1083" y="377" width="1" height="3" fill="#1FA81F"/>
<rect x="1096" y="377" width="1" height="3" fill="#1FA81F"/>
<rect x="1108" y="377" width="1" height="3" fill="#1FA81F"/>
<rect x="378" y="394" width="646" height="1" fill="#8c8c8c"/>
<rect x="378" y="408" width="646" height="1" fill="#8c8c8c"/>
<rect x="378" y="422" width="646" height="1" fill="#8c8c8c"/>
<rect x="726" y="401" width="299" height="2" fill="#9a9a9a"/>
<rect x="500" y="415" width="225" height="2" fill="#9a9a9a"/>
</g>
<polygon points="376.5,45.5 380.5,45.5 378.5,54" fill="#E8E040"/>
</svg>
<div class="t" style="left:378px;top:384px;width:10px;overflow:hidden;font-size:8.8px;color:#2DB52D;text-indent:-1px">ps</div>
<div class="t" style="left:401px;width:200px;text-align:center;top:384px;font-size:8.8px;color:#2DB52D;">500000 ps</div>
<div class="t" style="left:524px;width:200px;text-align:center;top:384px;font-size:8.8px;color:#2DB52D;">1000000 ps</div>
<div class="t" style="left:648px;width:200px;text-align:center;top:384px;font-size:8.8px;color:#2DB52D;">1500000 ps</div>
<div class="t" style="left:772px;width:200px;text-align:center;top:384px;font-size:8.8px;color:#2DB52D;">2000000 ps</div>
<div class="t" style="left:896px;width:200px;text-align:center;top:384px;font-size:8.8px;color:#2DB52D;">2500000 ps</div>
<div class="t" style="left:455px;top:409px;width:46px;height:13px;border:1px solid #C8A850;background:#000;color:#F0D870;font-size:8.8px;line-height:11px;text-align:center">405000 ps</div>
<div class="t" style="left:700px;top:423px;width:52px;height:13px;border:1px solid #C8A850;background:#000;color:#F0D870;font-size:8.8px;line-height:11px;text-align:center">1405000 ps</div>
<div class="t" style="left:588px;top:411px;width:48px;background:#000;color:#fff;font-size:8.8px;text-align:center">1000000 ps</div>
<div class="t" style="left:852px;top:397px;width:48px;background:#000;color:#fff;font-size:8.8px;text-align:center">8594175 ps</div>
<div class="t" style="left:377px;top:108.5px;color:#F4F4F4;font-size:8.65px">0000000101000111101010110000101001</div>
<div class="a" style="left:156px;top:454px;width:868px;height:13px;background:#ECE9D8;"></div>
<div class="a" style="left:156px;top:454px;width:868px;height:2px;background:#F6F4EC;"></div>
<div class="a" style="left:156px;top:456px;width:868px;height:1px;background:#D8D5C8;"></div>
<div class="a" style="left:155px;top:458px;width:1px;height:9px;background:#707060;"></div>
<div class="a" style="left:203px;top:459px;width:821px;height:1px;background:#5E5C50;"></div>
<div class="a" style="left:204px;top:460px;width:60px;height:7px;background:#D9D6CA;"></div>
<div class="a" style="left:203px;top:460px;width:1px;height:7px;background:#5E5C50;"></div>
<div class="a" style="left:264px;top:460px;width:1px;height:7px;background:#8E8B80;"></div>
<div class="a" style="left:265px;top:460px;width:59px;height:7px;background:#D9D6CA;"></div>
<div class="a" style="left:324px;top:460px;width:1px;height:7px;background:#5E5C50;"></div>
<svg class="a" style="left:160px;top:461px;" width="13" height="6" viewBox="0 0 13 6"><rect x="0" y="0" width="13" height="6" fill="#F4F4F4" stroke="#707070" stroke-width="0.8"/><rect x="1" y="3" width="11" height="3" fill="#083018"/></svg>
<div class="t" style="left:176px;top:460.5px;font-size:9.6px;color:#111;">Wave</div>
<svg class="a" style="left:208px;top:460px;" width="14" height="7" viewBox="0 0 14 7"><rect x="0" y="0" width="14" height="7" fill="#1A4A88"/><rect x="2" y="3" width="4" height="4" fill="#2A8AD8"/><rect x="8" y="3" width="4" height="4" fill="#2A8AD8"/><path d="M9 0 L13 3" stroke="#5AD060"/></svg>
<div class="t" style="left:224px;top:460.5px;font-size:9.6px;color:#111;">Dataflow</div>
<svg class="a" style="left:268px;top:459px;" width="13" height="8" viewBox="0 0 13 8"><path d="M1 1 H8 L11 4 V8 H1 Z" fill="#fff" stroke="#505050" stroke-width="0.9"/></svg>
<div class="t" style="left:284px;top:460.5px;font-size:9.6px;color:#111;">nco_tb.v</div>
<svg class="a" style="left:880px;top:417px;" width="125" height="21" viewBox="0 0 125 21"><g fill="none" stroke="#3A8A26" stroke-width="2.2" stroke-opacity="0.85" stroke-linecap="square"><path transform="translate(9,0)" d="M5 1 L1.5 7 L6.5 6.5 M7 4.5 L1.5 13 L7.5 11.5 M1 18 L7.5 15.5 M9.5 1.5 H18 V9.5 M10.5 5.5 H18 M9 9.5 H20.5 M14.5 9.5 V18.5 L12.5 17.5 M10 12 L12.5 14.5 M9 18 L12.5 15.5 M19 11.5 L16.5 14 M16 14.5 L20.5 18.5"/><path transform="translate(32,0)" d="M7 0.5 L2.5 6 M6.5 2 H13 L10 6 M4 6.5 H17.5 V13 H4 M10.5 6.5 V13 M4 6.5 V17 Q4 18.5 6 18.5 H19 V15.5"/><path transform="translate(55,0)" d="M2 1.5 L4.5 4 M1 8.5 L5 6 M10 0.5 L7.5 5 M8.5 3 H19 L17 6.5 M13.5 3 L10 8.5 M14 5.5 L19.5 8.5 M5 10.5 H16.5 V16 H5 Z M10.8 10.5 V16 M9.5 16.5 L3.5 19 M12.5 16.5 L18.5 19"/><path transform="translate(78,0)" d="M2 1.5 L4.5 3.5 M1.5 6.5 L4 8.5 M1 18.5 L4.5 12 M7 2 H20 M7.5 2 V12 L5.5 18.5 M10.5 5 H18 V11 H10.5 Z M10.5 8 H18 M14 2.5 L13 5 M14.2 11 V18.5 L12.8 17.5 M11 13.5 L8.5 17 M17 13.5 L19.5 17"/><path transform="translate(101,0)" d="M2 19 V2 H19 V17.5 Q19 18.5 17.5 18.5 M5 5.5 L9.5 14 M9.5 5.5 L5 14 M11.5 5.5 L16 14 M16 5.5 L11.5 14"/></g></svg>
<div class="t" style="left:890px;top:441px;font-size:13.95px;line-height:14px;color:#8EC878;opacity:0.95">www.downcc.com</div>
</body></html>
